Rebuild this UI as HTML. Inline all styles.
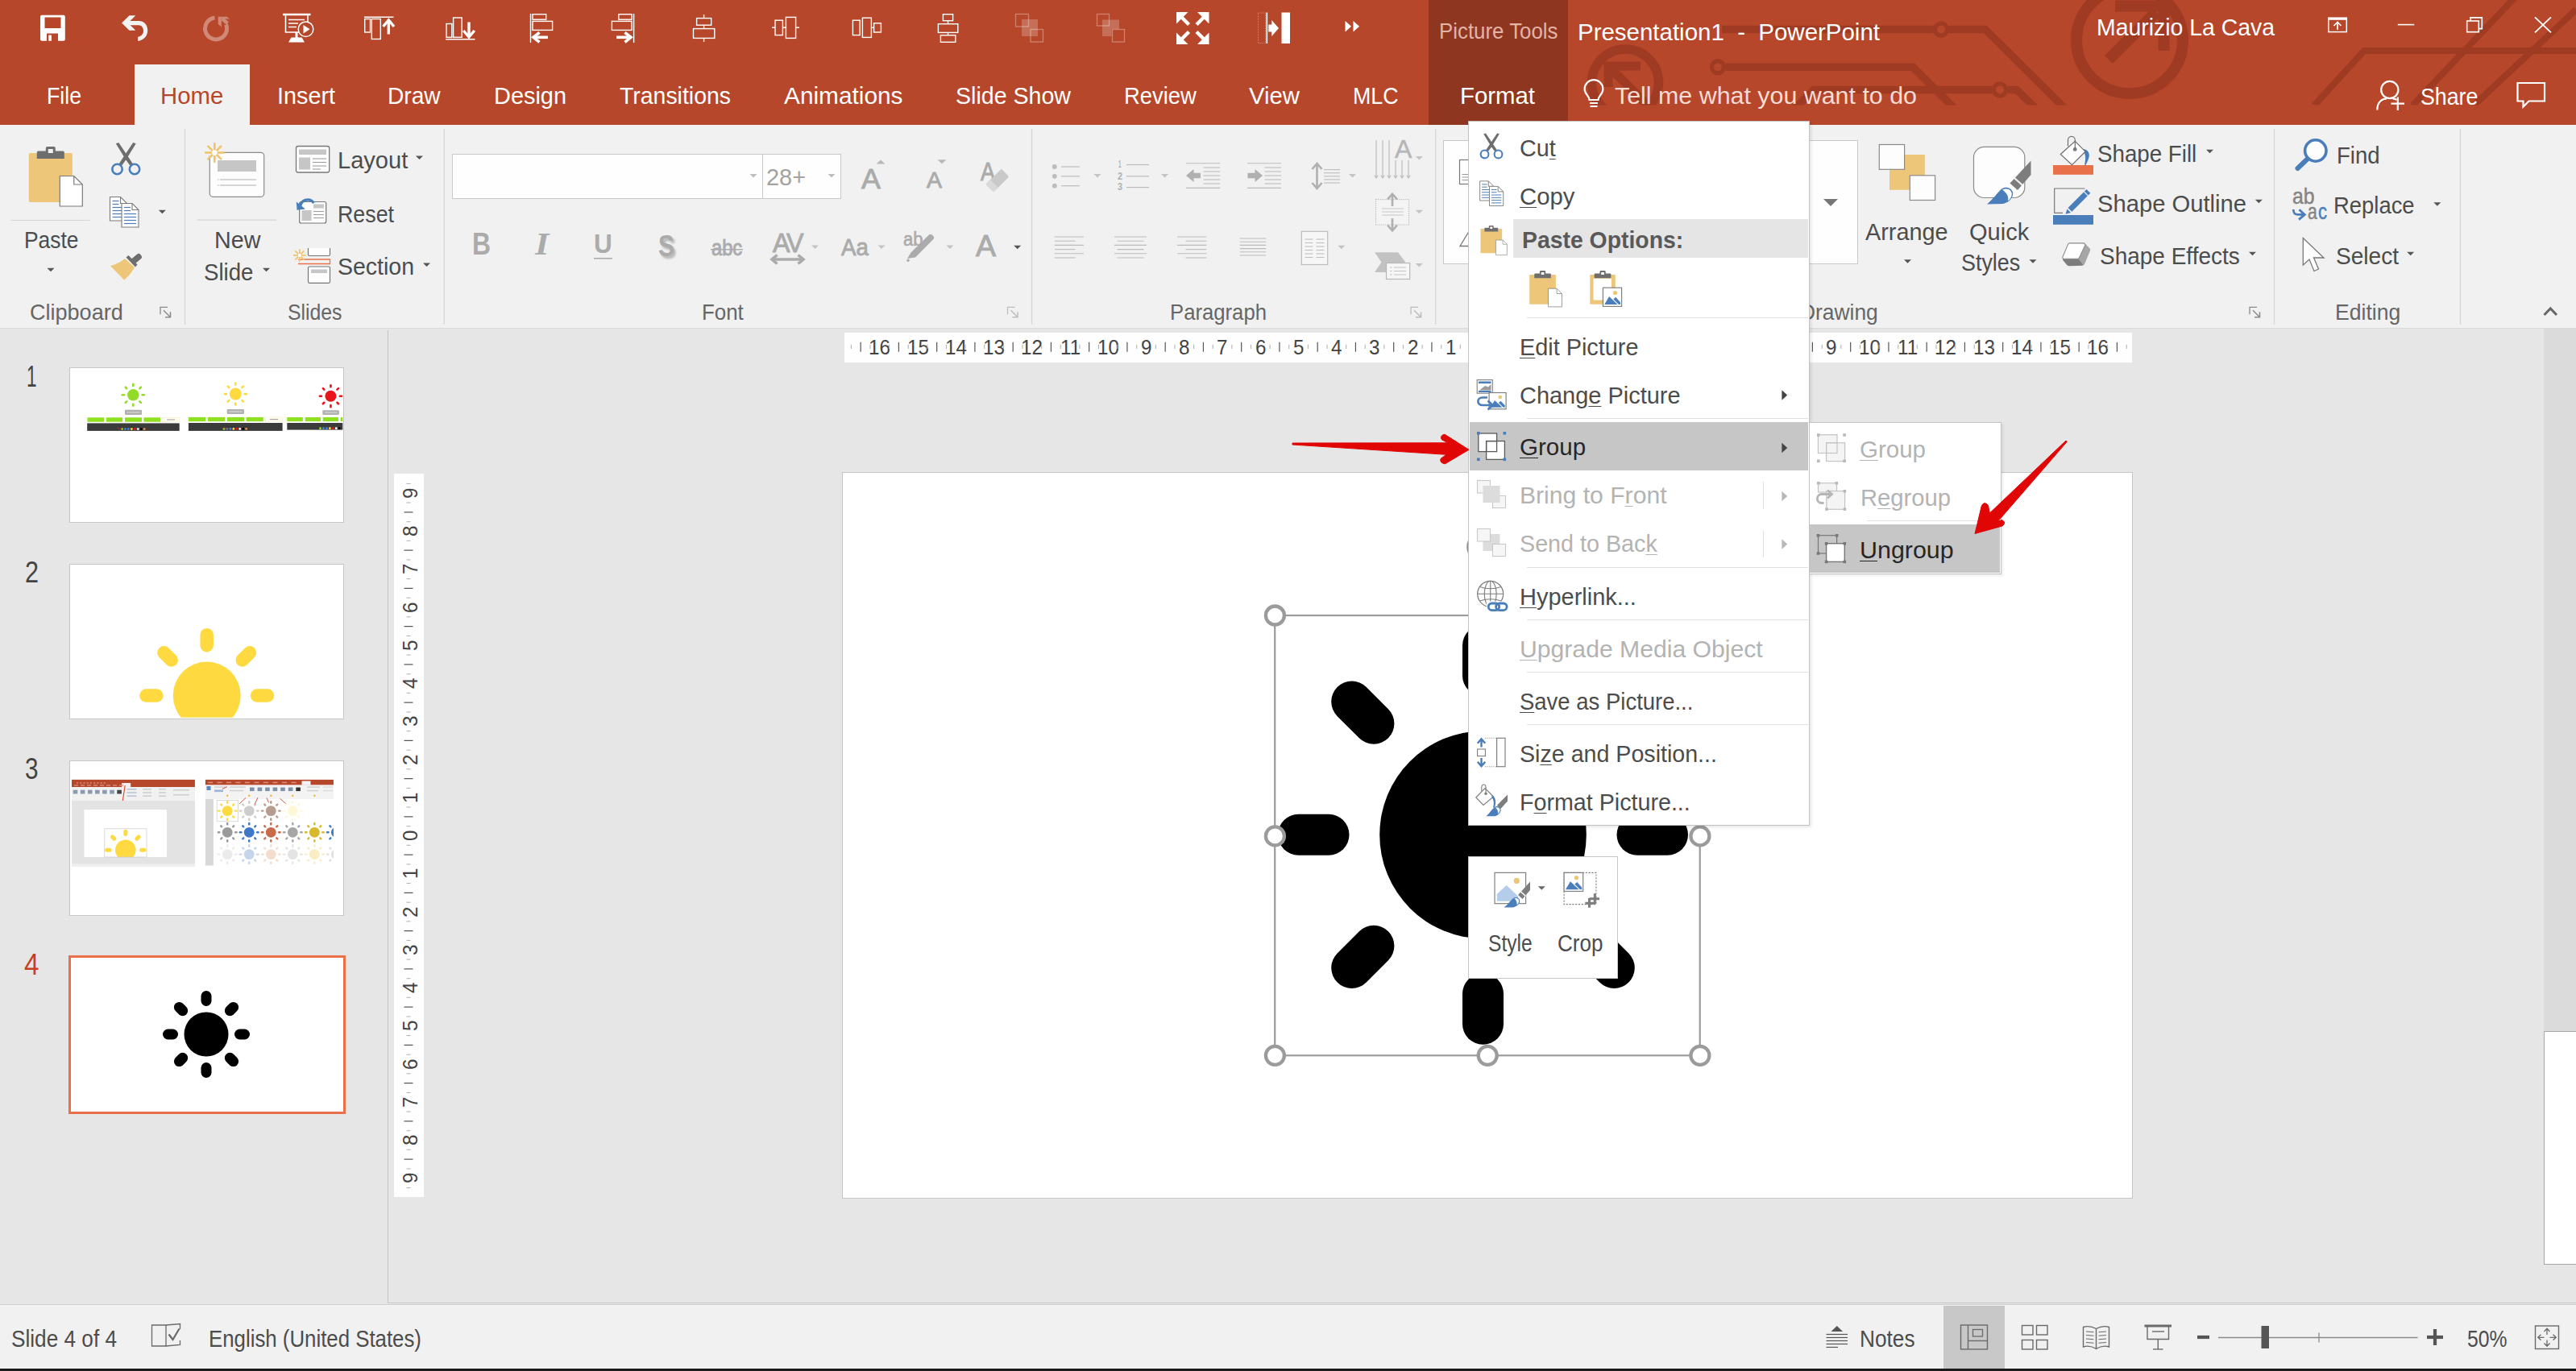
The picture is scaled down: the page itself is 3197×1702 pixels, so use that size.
<!DOCTYPE html><html><head><meta charset="utf-8"><title>PowerPoint</title><style>html,body{margin:0;padding:0;}body{width:3197px;height:1702px;position:relative;overflow:hidden;background:#e6e6e6;font-family:"Liberation Sans",sans-serif;}.t{position:absolute;white-space:pre;line-height:1;transform-origin:0 0;}.t u{text-decoration:underline;text-decoration-thickness:1.4px;text-underline-offset:2.6px;text-decoration-skip-ink:none;}.r{position:absolute;}.s{position:absolute;left:0;top:0;pointer-events:none;}</style></head><body><div class="r" style="left:0px;top:408px;width:3197px;height:1212px;background:#e6e6e6;"></div><div class="r" style="left:480.6px;top:410px;width:1.2px;height:1207px;background:#c2c2c2;"></div><div class="r" style="left:3157px;top:408px;width:40px;height:872.5px;background:#dbdbdb;"></div><div class="r" style="left:3157px;top:1280px;width:40px;height:290.3px;background:#fff;border-left:1.2px solid #a8a8a8;border-top:1.2px solid #a8a8a8;border-bottom:1.2px solid #a8a8a8;box-sizing:border-box;"></div><div class="r" style="left:481px;top:1616.5px;width:2716px;height:1.3px;background:#c6c6c6;"></div><div class="r" style="left:0px;top:1619.5px;width:3197px;height:80px;background:#f1f1f1;"></div><div class="r" style="left:0px;top:1619px;width:3197px;height:1.2px;background:#cfcfcf;"></div><div class="r" style="left:0px;top:1698.6px;width:3197px;height:3.4px;background:#1a1a1a;"></div><div class="t" style="left:32.50px;top:450.03px;font-size:36px;color:#444;transform:scaleX(0.6245);">1</div><div class="r" style="left:0px;top:0px;width:3197px;height:155px;background:#b7472a;"></div><svg class="s" width="3197" height="1702" viewBox="0 0 3197 1702" style=""><defs><clipPath id="cpat"><rect x="1945.5" y="0" width="1252" height="130.5"/></clipPath><clipPath id="ct1"><rect x="88" y="457" width="337.5" height="191"/></clipPath><clipPath id="ct2"><rect x="88" y="701" width="338" height="189.8"/></clipPath><clipPath id="ct3"><rect x="104.5" y="1005.1" width="102.5" height="58.8"/></clipPath><clipPath id="ct3b"><rect x="265" y="985" width="148.9" height="89.5"/></clipPath></defs><g clip-path="url(#cpat)"><g fill="none" stroke="#9f3b23" stroke-linecap="butt" stroke-linejoin="miter"><circle cx="2017" cy="102.5" r="41.5" stroke-width="11.5"/><path d="M2042,128 L2000,86 M1996,108 V82 H2036" stroke-width="11"/><circle cx="2132" cy="83.3" r="7.6" stroke-width="5.4"/><path d="M2142,83.3 H2374 L2428,137" stroke-width="9.5"/><circle cx="2409" cy="36.6" r="7.6" stroke-width="5.4"/><path d="M2137,36.6 H2399 M2419,36.6 H2464 L2566,138" stroke-width="9.5"/><circle cx="2482" cy="111.5" r="7.6" stroke-width="5.4"/><path d="M2224,138 L2251,111.5 H2472 M2492,111.5 H2503 L2530,138" stroke-width="9.5"/><circle cx="2643" cy="50" r="66" stroke-width="14"/><path d="M2617,74 L2676,15 M2625,7.5 H2685.5 V63" stroke-width="14"/><path d="M2872,131 L2934,63 H3197" stroke-width="8"/><path d="M2994,131 L3122,-4" stroke-width="8"/><path d="M3070,131 L3197,12" stroke-width="8"/></g></g></svg><div class="r" style="left:1773px;top:0px;width:172.5px;height:155px;background:#8f3621;"></div><div class="r" style="left:167px;top:80px;width:143px;height:76px;background:#f1f1f1;"></div><div class="t" style="left:58.25px;top:103.83px;font-size:29.5px;color:#fff;transform:scaleX(0.9048);">File</div><div class="t" style="left:198.75px;top:103.83px;font-size:29.5px;color:#b7472a;transform:scaleX(0.9942);">Home</div><div class="t" style="left:343.75px;top:103.83px;font-size:29.5px;color:#fff;transform:scaleX(0.9759);">Insert</div><div class="t" style="left:481.25px;top:103.83px;font-size:29.5px;color:#fff;transform:scaleX(0.9541);">Draw</div><div class="t" style="left:613.00px;top:103.83px;font-size:29.5px;color:#fff;transform:scaleX(0.9800);">Design</div><div class="t" style="left:769.00px;top:103.83px;font-size:29.5px;color:#fff;transform:scaleX(0.9637);">Transitions</div><div class="t" style="left:972.75px;top:103.83px;font-size:29.5px;color:#fff;transform:scaleX(1.0107);">Animations</div><div class="t" style="left:1186.00px;top:103.83px;font-size:29.5px;color:#fff;transform:scaleX(0.9683);">Slide Show</div><div class="t" style="left:1395.00px;top:103.83px;font-size:29.5px;color:#fff;transform:scaleX(0.9296);">Review</div><div class="t" style="left:1550.00px;top:103.83px;font-size:29.5px;color:#fff;transform:scaleX(0.9924);">View</div><div class="t" style="left:1679.00px;top:103.83px;font-size:29.5px;color:#fff;transform:scaleX(0.9073);">MLC</div><div class="t" style="left:1812.00px;top:103.83px;font-size:29.5px;color:#fff;transform:scaleX(0.9954);">Format</div><div class="t" style="left:2004.00px;top:103.83px;font-size:29.5px;color:#f6dcd5;transform:scaleX(1.0301);">Tell me what you want to do</div><div class="t" style="left:1786.00px;top:25.30px;font-size:28px;color:#e3b3a5;transform:scaleX(0.9231);">Picture Tools</div><div class="t" style="left:1958.00px;top:25.20px;font-size:29.3px;color:#fff;transform:scaleX(1.0055);">Presentation1  -  PowerPoint</div><div class="t" style="left:2601.50px;top:18.70px;font-size:29.3px;color:#fff;transform:scaleX(0.9692);">Maurizio La Cava</div><div class="t" style="left:3004.00px;top:105.40px;font-size:29.3px;color:#fff;transform:scaleX(0.9134);">Share</div><svg class="s" width="3197" height="1702" viewBox="0 0 3197 1702" style=""><path d="M52,18.8 H78.8 a2,2 0 0 1 2,2 V48.8 a2,2 0 0 1 -2,2 H52 a2,2 0 0 1 -2,-2 V20.8 a2,2 0 0 1 2,-2 z M55.5,21.5 V35 H75.5 V21.5 z M58,41.5 V50.8 H72 V41.5 z M60.3,43.5 h3.6 v7.3 h-3.6z" fill="#fff" fill-rule="evenodd"/><path d="M160.5,19.2 H168.3 L159,28.5 L168.3,37.8 H160.5 L151.1,28.5 z" fill="#f2f2f2"/><path d="M158.3,26.1 H172 C180,26.1 183.2,32 183.2,38 C183.2,45 178,50.2 171.1,50.9 L171.1,45.8 C175,45.2 178,42.2 178,38.4 C178,34 175.5,31.2 172,31.2 H158.3 z" fill="#f2f2f2"/><path d="M266.5,22 A13.5,13.5 0 1 0 280.6,30.5" fill="none" stroke="#d18977" stroke-width="5"/><path d="M270.7,20.8 H281.6 L285,23.6 H274.8 V33.6 L270.7,29.8 z" fill="#d18977"/><path d="M276,23.6 L282.5,29" stroke="#d18977" stroke-width="4.5"/><path d="M351,18 H385.5" stroke="#fff" stroke-width="2.6"/><path d="M354.5,19 V40 H371 M382,19 V27" fill="none" stroke="#fff" stroke-width="1.6"/><path d="M358,24.5 H378 M358,29 H370 M358,33.5 H368" stroke="#fff" stroke-width="1.4"/><circle cx="379.5" cy="36.2" r="9.3" fill="#b7472a" stroke="#fff" stroke-width="1.5"/><path d="M376.5,31 L384.5,36.2 L376.5,41.4z" fill="#fff"/><path d="M368,40 V47" stroke="#fff" stroke-width="3"/><path d="M361.5,46.5 H374.5 L378,52.5 H358 z" fill="#fff"/><line x1="452" y1="21.3" x2="488.5" y2="21.3" stroke="#fff" stroke-width="1.5" /><rect x="452.7" y="23.5" width="6.800000000000011" height="16.5" fill="none" stroke="#fff" stroke-width="1.4" rx="0" /><rect x="461.3" y="23.5" width="11.0" height="25.0" fill="none" stroke="#fff" stroke-width="1.4" rx="0" /><path d="M482.3,42.5 V27" stroke="#fff" stroke-width="3.4"/><path d="M475.5,33 L482.3,25 L489,33" fill="none" stroke="#fff" stroke-width="3.4"/><line x1="553" y1="48.8" x2="589.5" y2="48.8" stroke="#fff" stroke-width="1.5" /><rect x="554" y="29.5" width="6.7999999999999545" height="16.799999999999997" fill="none" stroke="#fff" stroke-width="1.4" rx="0" /><rect x="562.6" y="22" width="10.600000000000023" height="24.299999999999997" fill="none" stroke="#fff" stroke-width="1.4" rx="0" /><path d="M582,27.5 V44" stroke="#fff" stroke-width="3.4"/><path d="M575.2,38 L582,46 L588.8,38" fill="none" stroke="#fff" stroke-width="3.4"/><line x1="658.5" y1="17" x2="658.5" y2="53" stroke="#fff" stroke-width="1.4" /><rect x="661" y="17.7" width="16.700000000000045" height="6.5" fill="none" stroke="#fff" stroke-width="1.4" rx="0" /><rect x="661" y="26.4" width="24.600000000000023" height="11.0" fill="none" stroke="#fff" stroke-width="1.4" rx="0" /><path d="M680,46.3 H664" stroke="#fff" stroke-width="3.6"/><path d="M669.5,40.3 L662,46.3 L669.5,52.3" fill="none" stroke="#fff" stroke-width="3.6"/><line x1="786.6" y1="17" x2="786.6" y2="53" stroke="#fff" stroke-width="1.4" /><rect x="767.8" y="17.7" width="16.200000000000045" height="6.5" fill="none" stroke="#fff" stroke-width="1.4" rx="0" /><rect x="759.4" y="26.4" width="24.600000000000023" height="11.0" fill="none" stroke="#fff" stroke-width="1.4" rx="0" /><path d="M765,46.3 H781" stroke="#fff" stroke-width="3.6"/><path d="M775.5,40.3 L783,46.3 L775.5,52.3" fill="none" stroke="#fff" stroke-width="3.6"/><line x1="873.6" y1="18" x2="873.6" y2="52" stroke="#fff" stroke-width="1.4" /><rect x="864.6" y="22.6" width="18.100000000000023" height="8.599999999999998" fill="#b7472a" stroke="#fff" stroke-width="1.4" rx="0" /><rect x="860.5" y="35.6" width="26.299999999999955" height="11.799999999999997" fill="#b7472a" stroke="#fff" stroke-width="1.4" rx="0" /><line x1="958" y1="34.3" x2="992" y2="34.3" stroke="#fff" stroke-width="1.4" /><rect x="962" y="25.2" width="9.399999999999977" height="18.400000000000002" fill="#b7472a" stroke="#fff" stroke-width="1.4" rx="0" /><rect x="975.4" y="21.4" width="12.200000000000045" height="26.0" fill="#b7472a" stroke="#fff" stroke-width="1.4" rx="0" /><rect x="1058.4" y="25.2" width="8.799999999999955" height="18.400000000000002" fill="none" stroke="#fff" stroke-width="1.4" rx="0" /><rect x="1070.4" y="22.2" width="11.0" height="24.2" fill="none" stroke="#fff" stroke-width="1.4" rx="0" /><rect x="1084.6" y="28.8" width="8.800000000000182" height="11.2" fill="none" stroke="#fff" stroke-width="1.4" rx="0" /><line x1="1081.4" y1="34.3" x2="1084.6" y2="34.3" stroke="#fff" stroke-width="1.4" /><line x1="1176.5" y1="25.7" x2="1176.5" y2="43.8" stroke="#fff" stroke-width="1.4" /><rect x="1170.4" y="17.7" width="12.199999999999818" height="8.0" fill="none" stroke="#fff" stroke-width="1.4" rx="0" /><rect x="1164.4" y="29.7" width="24.399999999999864" height="10.7" fill="#b7472a" stroke="#fff" stroke-width="1.4" rx="0" /><rect x="1167.4" y="43.8" width="18.399999999999864" height="8.5" fill="none" stroke="#fff" stroke-width="1.4" rx="0" /><rect x="1260.5" y="17.5" width="16.0" height="15.5" fill="none" stroke="rgba(255,255,255,0.32)" stroke-width="1.3" rx="0" /><rect x="1268" y="24" width="20" height="21" fill="rgba(255,255,255,0.22)"/><rect x="1279" y="36.5" width="15.5" height="15.5" fill="none" stroke="rgba(255,255,255,0.32)" stroke-width="1.3" rx="0" /><rect x="1361.5" y="17.5" width="15.0" height="14.5" fill="none" stroke="rgba(255,255,255,0.32)" stroke-width="1.3" rx="0" /><rect x="1368" y="24.5" width="11.5" height="20.5" fill="rgba(255,255,255,0.22)"/><rect x="1379.5" y="24.5" width="9.5" height="11.5" fill="rgba(255,255,255,0.22)"/><rect x="1380.5" y="36.5" width="15.0" height="15.5" fill="none" stroke="rgba(255,255,255,0.32)" stroke-width="1.3" rx="0" /><path d="M1460,15 h14.5 l-14.5,14.5 z" fill="#fff"/><path d="M1465,20 L1475.5,30.5" stroke="#fff" stroke-width="4.4"/><path d="M1500.5,15 h-14.5 l14.5,14.5 z" fill="#fff"/><path d="M1495.5,20 L1485.0,30.5" stroke="#fff" stroke-width="4.4"/><path d="M1460,55 h14.5 l-14.5,-14.5 z" fill="#fff"/><path d="M1465,50 L1475.5,39.5" stroke="#fff" stroke-width="4.4"/><path d="M1500.5,55 h-14.5 l14.5,-14.5 z" fill="#fff"/><path d="M1495.5,50 L1485.0,39.5" stroke="#fff" stroke-width="4.4"/><rect x="1561.5" y="16" width="9.0" height="37.5" fill="none" stroke="rgba(255,255,255,0.35)" stroke-width="1" rx="0" stroke-dasharray="1 1"/><line x1="1572.3" y1="15.5" x2="1572.3" y2="54" stroke="#fff" stroke-width="1.6" /><path d="M1574.3,30.5 h4 v-5.5 l8.7,10 l-8.7,10 v-5.5 h-4z" fill="#fff"/><rect x="1590.5" y="15.5" width="10.5" height="38.5" fill="#fff"/><path d="M1669.5,26 l7.5,6.7 l-7.5,6.7z M1679.5,26 l7.5,6.7 l-7.5,6.7z" fill="#fff"/><path d="M1972.5,124 C1972.5,119 1966.6,117 1966.6,110.5 A11.4,11.4 0 0 1 1989.4,110.5 C1989.4,117 1983.5,119 1983.5,124 z" fill="none" stroke="#fff" stroke-width="2.2"/><path d="M1973,128 H1983 M1973.5,132 H1982.5" stroke="#fff" stroke-width="2.2"/><rect x="2889.8" y="22.3" width="22.5" height="17.3" fill="none" stroke="#fff" stroke-width="1.5" rx="0" /><line x1="2889" y1="23.3" x2="2913" y2="23.3" stroke="#fff" stroke-width="3" /><path d="M2901,37 V28 M2896.5,32 L2901,27.5 L2905.5,32" fill="none" stroke="#fff" stroke-width="1.6"/><line x1="2975.8" y1="30.6" x2="2996.3" y2="30.6" stroke="#fff" stroke-width="1.6" /><rect x="3061.7" y="26" width="14.600000000000364" height="13.700000000000003" fill="none" stroke="#fff" stroke-width="1.6" rx="0" /><path d="M3066,26 V21.9 H3080.3 V35.6 H3076.3" fill="none" stroke="#fff" stroke-width="1.6"/><path d="M3146,21.4 L3166,40.4 M3166,21.4 L3146,40.4" stroke="#fff" stroke-width="1.8"/><circle cx="2965.8" cy="111.5" r="10.6" fill="none" stroke="#fff" stroke-width="2.2"/><path d="M2950.3,136.5 C2950.3,126 2957,122.5 2962,122.3 M2969.5,122.3 C2971.5,122.5 2973,123 2974.5,123.8" fill="none" stroke="#fff" stroke-width="2.2"/><path d="M2975.8,120.5 V137 M2967.5,128.7 H2984" stroke="#fff" stroke-width="2.2"/><path d="M3124.5,103 H3158 V125.5 H3138.5 L3131.5,132.5 V125.5 H3124.5 z" fill="none" stroke="#fff" stroke-width="2.2"/></svg><div class="r" style="left:0px;top:155px;width:3197px;height:252px;background:#f1f1f1;"></div><div class="r" style="left:0px;top:406.5px;width:3197px;height:1.5px;background:#dadada;"></div><div class="t" style="left:36.75px;top:374.37px;font-size:27.8px;color:#666;transform:scaleX(0.9728);">Clipboard</div><div class="t" style="left:357.00px;top:374.37px;font-size:27.8px;color:#666;transform:scaleX(0.8914);">Slides</div><div class="t" style="left:871.00px;top:374.37px;font-size:27.8px;color:#666;transform:scaleX(0.9303);">Font</div><div class="t" style="left:1451.75px;top:374.37px;font-size:27.8px;color:#666;transform:scaleX(0.9243);">Paragraph</div><div class="t" style="left:2897.60px;top:374.37px;font-size:27.8px;color:#666;transform:scaleX(0.9552);">Editing</div><div class="t" style="left:2234.45px;top:374.37px;font-size:27.8px;color:#666;transform:scaleX(0.9493);">Drawing</div><div class="t" style="left:29.50px;top:282.70px;font-size:29.3px;color:#4c4c4c;transform:scaleX(0.9010);">Paste</div><div class="t" style="left:265.50px;top:282.70px;font-size:29.3px;color:#4c4c4c;transform:scaleX(0.9798);">New</div><div class="t" style="left:253.00px;top:322.70px;font-size:29.3px;color:#4c4c4c;transform:scaleX(0.9438);">Slide</div><div class="t" style="left:418.75px;top:183.95px;font-size:29.3px;color:#4c4c4c;transform:scaleX(0.9919);">Layout</div><div class="t" style="left:418.75px;top:250.70px;font-size:29.3px;color:#4c4c4c;transform:scaleX(0.9147);">Reset</div><div class="t" style="left:418.75px;top:316.45px;font-size:29.3px;color:#4c4c4c;transform:scaleX(0.9722);">Section</div><div class="r" style="left:560.5px;top:190.7px;width:483px;height:56.8px;background:#fefefe;border:1.3px solid #c8c8c8;box-sizing:border-box;"></div><div class="r" style="left:946px;top:190.7px;width:1.3px;height:56.8px;background:#c8c8c8;"></div><div class="t" style="left:951.00px;top:205.20px;font-size:29.3px;color:#a3a3a3;transform:scaleX(0.9861);">28+</div><div class="t" style="left:1069.00px;top:204.17px;font-size:35px;color:#ababab;transform:scaleX(1.0195);-webkit-text-stroke:0.9px #ababab;">A</div><div class="t" style="left:1149.50px;top:210.10px;font-size:28px;color:#ababab;transform:scaleX(1.0173);-webkit-text-stroke:0.9px #ababab;">A</div><div class="t" style="left:1217.00px;top:197.56px;font-size:31px;color:#ababab;transform:scaleX(0.8705);-webkit-text-stroke:0.9px #ababab;">A</div><div class="t" style="left:586.00px;top:283.71px;font-size:38.5px;color:#ababab;transform:scaleX(0.8274);font-weight:bold;">B</div><div class="t" style="left:664.44px;top:283.25px;font-size:39px;color:#ababab;transform:scaleX(1.1383);font-weight:bold;font-style:italic;font-family:'Liberation Serif',serif;">I</div><div class="t" style="left:737.00px;top:287.49px;font-size:32.5px;color:#ababab;transform:scaleX(0.9717);font-weight:bold;">U</div><div class="t" style="left:816.50px;top:287.53px;font-size:36px;color:#ababab;transform:scaleX(0.8329);font-weight:bold;text-shadow:3px 3px 3px rgba(0,0,0,0.25);">S</div><div class="t" style="left:882.80px;top:294.64px;font-size:27px;color:#ababab;transform:scaleX(0.8777);-webkit-text-stroke:0.9px #ababab;">abc</div><div class="t" style="left:958.50px;top:284.57px;font-size:33px;color:#ababab;transform:scaleX(0.9740);letter-spacing:-2px;-webkit-text-stroke:0.9px #ababab;">AV</div><div class="t" style="left:1044.00px;top:293.45px;font-size:29px;color:#ababab;transform:scaleX(0.9522);-webkit-text-stroke:0.9px #ababab;">Aa</div><div class="t" style="left:1120.80px;top:286.13px;font-size:23px;color:#ababab;transform:scaleX(0.9579);-webkit-text-stroke:0.6px #ababab;">ab</div><div class="t" style="left:1211.00px;top:287.53px;font-size:36px;color:#ababab;transform:scaleX(1.0411);-webkit-text-stroke:0.9px #ababab;">A</div><div class="t" style="left:1387.50px;top:198.22px;font-size:12.5px;color:#b0b0b0;transform:scaleX(0.5036);font-weight:bold;">1</div><div class="t" style="left:1386.50px;top:212.52px;font-size:12.5px;color:#b0b0b0;transform:scaleX(0.8633);font-weight:bold;">2</div><div class="t" style="left:1386.50px;top:226.32px;font-size:12.5px;color:#b0b0b0;transform:scaleX(0.8633);font-weight:bold;">3</div><div class="t" style="left:1730.50px;top:170.48px;font-size:30.5px;color:#b6b6b6;transform:scaleX(1.0470);-webkit-text-stroke:0.5px #b6b6b6;">A</div><div class="r" style="left:1791px;top:174.3px;width:515.3px;height:154px;background:#fefefe;border:1.3px solid #c8c8c8;box-sizing:border-box;"></div><div class="t" style="left:1815.50px;top:200.15px;font-size:14px;color:#4a7ebb;transform:scaleX(0.9638);">A</div><div class="t" style="left:2315.00px;top:272.70px;font-size:29.3px;color:#4c4c4c;transform:scaleX(0.9832);">Arrange</div><div class="t" style="left:2443.75px;top:272.70px;font-size:29.3px;color:#4c4c4c;transform:scaleX(0.9907);">Quick</div><div class="t" style="left:2434.25px;top:311.45px;font-size:29.3px;color:#4c4c4c;transform:scaleX(0.9181);">Styles</div><div class="t" style="left:2603.00px;top:175.95px;font-size:29.3px;color:#4c4c4c;transform:scaleX(0.9459);">Shape Fill</div><div class="t" style="left:2603.00px;top:237.70px;font-size:29.3px;color:#4c4c4c;transform:scaleX(0.9962);">Shape Outline</div><div class="t" style="left:2606.25px;top:302.70px;font-size:29.3px;color:#4c4c4c;transform:scaleX(0.9552);">Shape Effects</div><div class="t" style="left:2899.80px;top:178.00px;font-size:29.3px;color:#4c4c4c;transform:scaleX(0.9405);">Find</div><div class="t" style="left:2844.80px;top:230.20px;font-size:28px;color:#858585;transform:scaleX(0.8864);-webkit-text-stroke:0.5px #858585;">ab</div><div class="t" style="left:2864.10px;top:249.00px;font-size:28px;color:#858585;transform:scaleX(0.7566);-webkit-text-stroke:0.5px #858585;">a</div><div class="t" style="left:2877.20px;top:249.00px;font-size:28px;color:#4a7ebb;transform:scaleX(0.7857);-webkit-text-stroke:0.5px #4a7ebb;">c</div><div class="t" style="left:2896.00px;top:240.20px;font-size:29.3px;color:#4c4c4c;transform:scaleX(0.9358);">Replace</div><div class="t" style="left:2899.20px;top:303.10px;font-size:29.3px;color:#4c4c4c;transform:scaleX(0.9592);">Select</div><svg class="s" width="3197" height="1702" viewBox="0 0 3197 1702" style=""><line x1="229.5" y1="160" x2="229.5" y2="402.5" stroke="#d4d4d4" stroke-width="1.2" /><line x1="551.3" y1="160" x2="551.3" y2="402.5" stroke="#d4d4d4" stroke-width="1.2" /><line x1="1280.5" y1="160" x2="1280.5" y2="402.5" stroke="#d4d4d4" stroke-width="1.2" /><line x1="1781.7" y1="160" x2="1781.7" y2="402.5" stroke="#d4d4d4" stroke-width="1.2" /><line x1="2822.5" y1="160" x2="2822.5" y2="402.5" stroke="#d4d4d4" stroke-width="1.2" /><line x1="3053.4" y1="160" x2="3053.4" y2="402.5" stroke="#d4d4d4" stroke-width="1.2" /><path d="M199,390.3 V381.3 H208" fill="none" stroke="#8a8a8a" stroke-width="1.3"/><path d="M203,385.3 L211,393.3 M211.5,387.3 V393.8 H205" fill="none" stroke="#8a8a8a" stroke-width="1.5"/><path d="M1250.5,390.3 V381.3 H1259.5" fill="none" stroke="#bdbdbd" stroke-width="1.3"/><path d="M1254.5,385.3 L1262.5,393.3 M1263.0,387.3 V393.8 H1256.5" fill="none" stroke="#bdbdbd" stroke-width="1.5"/><path d="M1751,390.3 V381.3 H1760" fill="none" stroke="#bdbdbd" stroke-width="1.3"/><path d="M1755,385.3 L1763,393.3 M1763.5,387.3 V393.8 H1757" fill="none" stroke="#bdbdbd" stroke-width="1.5"/><path d="M2792,390.3 V381.3 H2801" fill="none" stroke="#8a8a8a" stroke-width="1.3"/><path d="M2796,385.3 L2804,393.3 M2804.5,387.3 V393.8 H2798" fill="none" stroke="#8a8a8a" stroke-width="1.5"/><path d="M3157.5,391 L3165.3,383 L3173,391" fill="none" stroke="#666" stroke-width="3" /><g transform="translate(35.8,182) scale(1.0)"><rect x="0" y="8" width="54" height="61" rx="2" fill="#edc67a"/><path d="M10,15 V7 a1.5,1.5 0 0 1 1.5,-1.5 H21 V2 a2,2 0 0 1 2,-2 h8 a2,2 0 0 1 2,2 V5.5 H42.5 a1.5,1.5 0 0 1 1.5,1.5 V15 z M24,3 v5 h6 v-5z" fill="#6e6e6e" fill-rule="evenodd"/><path d="M38.5,36.5 H56 L66.5,47 V74 H38.5z" fill="#fff" stroke="#7a7a7a" stroke-width="1.2"/><path d="M56,36.5 V47 H66.5" fill="none" stroke="#7a7a7a" stroke-width="1.2"/></g><line x1="14" y1="273.5" x2="111.5" y2="273.5" stroke="#d4d4d4" stroke-width="1.2" /><path d="M58.5,332.75 h9 l-4.5,4.5 z" fill="#555"/><g transform="translate(137.5,177) scale(1.0)"><path d="M6.3,1.2 L9.8,0 L27.5,26.5 L24.2,29 L18.75,21.5 z" fill="#6e6e6e"/><path d="M31.2,1.2 L27.7,0 L10,26.5 L13.3,29 L18.75,21.5 z" fill="#6e6e6e"/><circle cx="8" cy="33" r="6.2" fill="none" stroke="#4a7ebb" stroke-width="2.6"/><circle cx="29.5" cy="33" r="6.2" fill="none" stroke="#4a7ebb" stroke-width="2.6"/></g><g transform="translate(136,244) scale(1.0)"><path d="M0.5,0.5 h13 l8,8 v21.5 h-21z" fill="#fff" stroke="#7a7a7a" stroke-width="1.1"/><path d="M13.5,0.5 v8 h8" fill="none" stroke="#7a7a7a" stroke-width="1.1"/><path d="M3.5,5.5 h8" stroke="#4a7ebb" stroke-width="1.2"/><path d="M3.5,9.5 h8" stroke="#4a7ebb" stroke-width="1.2"/><path d="M3.5,13.5 h15" stroke="#4a7ebb" stroke-width="1.2"/><path d="M3.5,17.5 h15" stroke="#4a7ebb" stroke-width="1.2"/><path d="M3.5,21.5 h15" stroke="#4a7ebb" stroke-width="1.2"/><path d="M3.5,25.5 h15" stroke="#4a7ebb" stroke-width="1.2"/><path d="M15,8.5 h13 l8,8 v21.5 h-21z" fill="#fff" stroke="#7a7a7a" stroke-width="1.1"/><path d="M28,8.5 v8 h8" fill="none" stroke="#7a7a7a" stroke-width="1.1"/><path d="M18,13.5 h8" stroke="#4a7ebb" stroke-width="1.2"/><path d="M18,17.5 h8" stroke="#4a7ebb" stroke-width="1.2"/><path d="M18,21.5 h15" stroke="#4a7ebb" stroke-width="1.2"/><path d="M18,25.5 h15" stroke="#4a7ebb" stroke-width="1.2"/><path d="M18,29.5 h15" stroke="#4a7ebb" stroke-width="1.2"/><path d="M18,33.5 h15" stroke="#4a7ebb" stroke-width="1.2"/></g><path d="M196.8,260.75 h9 l-4.5,4.5 z" fill="#555"/><g transform="translate(137,315)"><path d="M0,15 C8,13 14,9 18,6 L30,17 C27,22 22,29 17,32.5 z" fill="#edc67a"/><path d="M19.5,4.5 L22.5,2 L33.5,13.5 L31,16.5 z" fill="#6e6e6e"/><path d="M26,6.5 L33,0.8 a3.2,3.2 0 0 1 4.5,0.4 l0.6,0.8 a3.2,3.2 0 0 1 -0.4,4.5 L30.5,12.5z" fill="#6e6e6e"/></g><rect x="260.3" y="189.3" width="67.39999999999998" height="55.0" fill="#fdfdfd" stroke="#8c8c8c" stroke-width="1.2" rx="4" /><rect x="270" y="199" width="48" height="14" fill="#c6c6c6"/><line x1="273" y1="223" x2="318" y2="223" stroke="#b0b0b0" stroke-width="1.1" /><line x1="273" y1="230" x2="318" y2="230" stroke="#b0b0b0" stroke-width="1.1" /><line x1="270" y1="223" x2="271.5" y2="223" stroke="#b0b0b0" stroke-width="1.1" /><line x1="270" y1="230" x2="271.5" y2="230" stroke="#b0b0b0" stroke-width="1.1" /><circle cx="266.3" cy="189.5" r="7.626" fill="#f1f1f1"/><line x1="269.375" y1="189.5" x2="278.6" y2="189.5" stroke="#f0c46c" stroke-width="2.6" /><line x1="268.4743533521486" y1="191.67435335214864" x2="274.9974134085945" y2="198.19741340859454" stroke="#f0c46c" stroke-width="2.6" /><line x1="266.3" y1="192.575" x2="266.3" y2="201.8" stroke="#f0c46c" stroke-width="2.6" /><line x1="264.1256466478514" y1="191.67435335214864" x2="257.6025865914055" y2="198.19741340859454" stroke="#f0c46c" stroke-width="2.6" /><line x1="263.225" y1="189.5" x2="254.0" y2="189.5" stroke="#f0c46c" stroke-width="2.6" /><line x1="264.1256466478514" y1="187.32564664785136" x2="257.6025865914055" y2="180.80258659140546" stroke="#f0c46c" stroke-width="2.6" /><line x1="266.3" y1="186.425" x2="266.3" y2="177.2" stroke="#f0c46c" stroke-width="2.6" /><line x1="268.4743533521486" y1="187.32564664785136" x2="274.9974134085945" y2="180.80258659140546" stroke="#f0c46c" stroke-width="2.6" /><circle cx="266.3" cy="189.5" r="3.1980000000000004" fill="#fff"/><line x1="245" y1="273.2" x2="343" y2="273.2" stroke="#d4d4d4" stroke-width="1.2" /><path d="M326.0,332.75 h9 l-4.5,4.5 z" fill="#555"/><rect x="367.5" y="181.5" width="41.19999999999999" height="32.5" fill="#fdfdfd" stroke="#777" stroke-width="1.3" rx="2.5" /><rect x="371" y="185.5" width="34" height="6.5" fill="#c6c6c6"/><rect x="371" y="195.5" width="14" height="15" fill="#c6c6c6"/><line x1="388" y1="197" x2="405" y2="197" stroke="#a0a0a0" stroke-width="1.1" /><line x1="388" y1="201.5" x2="405" y2="201.5" stroke="#a0a0a0" stroke-width="1.1" /><line x1="388" y1="206" x2="405" y2="206" stroke="#a0a0a0" stroke-width="1.1" /><line x1="388" y1="210" x2="398" y2="210" stroke="#a0a0a0" stroke-width="1.1" /><path d="M516.0,193.55 h9 l-4.5,4.5 z" fill="#555"/><rect x="371.7" y="250.5" width="33.0" height="26.5" fill="#fdfdfd" stroke="#777" stroke-width="1.2" rx="2" /><rect x="389" y="253.5" width="13" height="5" fill="#c6c6c6"/><rect x="374.5" y="261" width="12" height="13" fill="#c6c6c6"/><line x1="389" y1="262.5" x2="402" y2="262.5" stroke="#a0a0a0" stroke-width="1.1" /><line x1="389" y1="266.5" x2="402" y2="266.5" stroke="#a0a0a0" stroke-width="1.1" /><line x1="389" y1="270.5" x2="402" y2="270.5" stroke="#a0a0a0" stroke-width="1.1" /><path d="M372.5,258 C372.5,248 384,244.5 389.5,252" fill="none" stroke="#4a7ebb" stroke-width="3.4"/><path d="M367.8,250.5 L379,259.5 L368.5,260.8 z" fill="#4a7ebb"/><path d="M382.5,308 V316 a1.5,1.5 0 0 0 1.5,1.5 H408 a1.5,1.5 0 0 0 1.5,-1.5 V308" fill="#fdfdfd" stroke="#777" stroke-width="1.2"/><path d="M370,322 H409.5 V327.5 H370" fill="none" stroke="#e9714a" stroke-width="1.3"/><rect x="382.5" y="331" width="27.0" height="20.30000000000001" fill="#fdfdfd" stroke="#777" stroke-width="1.2" rx="1.5" /><rect x="386" y="334.5" width="20" height="4.5" fill="#c6c6c6"/><circle cx="371.8" cy="317" r="4.836" fill="#f1f1f1"/><line x1="373.75" y1="317.0" x2="379.6" y2="317.0" stroke="#f0c46c" stroke-width="1.8" /><line x1="373.1788582233138" y1="318.3788582233138" x2="377.3154328932551" y2="322.5154328932551" stroke="#f0c46c" stroke-width="1.8" /><line x1="371.8" y1="318.95" x2="371.8" y2="324.8" stroke="#f0c46c" stroke-width="1.8" /><line x1="370.4211417766862" y1="318.3788582233138" x2="366.28456710674493" y2="322.5154328932551" stroke="#f0c46c" stroke-width="1.8" /><line x1="369.85" y1="317.0" x2="364.0" y2="317.0" stroke="#f0c46c" stroke-width="1.8" /><line x1="370.4211417766862" y1="315.6211417766862" x2="366.28456710674493" y2="311.4845671067449" stroke="#f0c46c" stroke-width="1.8" /><line x1="371.8" y1="315.05" x2="371.8" y2="309.2" stroke="#f0c46c" stroke-width="1.8" /><line x1="373.1788582233138" y1="315.6211417766862" x2="377.3154328932551" y2="311.4845671067449" stroke="#f0c46c" stroke-width="1.8" /><circle cx="371.8" cy="317" r="2.028" fill="#fff"/><path d="M525.0,326.55 h9 l-4.5,4.5 z" fill="#555"/><path d="M930.5,216.05 h9 l-4.5,4.5 z" fill="#bdbdbd"/><path d="M1027.5,216.05 h9 l-4.5,4.5 z" fill="#bdbdbd"/><path d="M1087.5,203.5 l5.5,-5 l5.5,5z" fill="#b8b8b8"/><path d="M1163.5,198.3 h11 l-5.5,5z" fill="#b8b8b8"/><path d="M1224.5,227.5 L1241.5,211 a2,2 0 0 1 2.8,0 L1251,218 a2,2 0 0 1 0,2.8 L1234.5,237 a2,2 0 0 1 -2.8,0 L1224.5,230 a2,2 0 0 1 0,-2.5z" fill="#c9c9c9"/><path d="M1224.5,227.5 l4.5,-4.4 l9.8,9.8 l-4.3,4.1 a2,2 0 0 1 -2.8,0 L1224.5,230z" fill="#d9d9d9"/><line x1="737" y1="320.8" x2="759.8" y2="320.8" stroke="#ababab" stroke-width="1.6" /><line x1="882" y1="309.8" x2="922" y2="309.8" stroke="#ababab" stroke-width="1.6" /><path d="M960,322 H995" stroke="#ababab" stroke-width="3.6"/><path d="M964.5,316.5 L958,322 L964.5,327.5 M990.5,316.5 L997,322 L990.5,327.5" fill="none" stroke="#ababab" stroke-width="3.6"/><path d="M1007.0,304.55 h9 l-4.5,4.5 z" fill="#c4c4c4"/><path d="M1089.5,304.55 h9 l-4.5,4.5 z" fill="#c4c4c4"/><path d="M1126,321 L1130.5,313.5 L1153,291.5 a2.6,2.6 0 0 1 3.6,0 l1.8,1.8 a2.6,2.6 0 0 1 0,3.6 L1136,319.5 z" fill="#ababab"/><circle cx="1127" cy="323.3" r="1.7" fill="#ababab"/><path d="M1174.5,304.55 h9 l-4.5,4.5 z" fill="#c4c4c4"/><path d="M1258.2,304.75 h9 l-4.5,4.5 z" fill="#555"/><circle cx="1308.8" cy="207" r="2.9" fill="#bcbcbc" stroke="none" stroke-width="1.5"/><line x1="1317" y1="207" x2="1339.8" y2="207" stroke="#bcbcbc" stroke-width="1.2" /><circle cx="1308.8" cy="218.8" r="2.9" fill="#bcbcbc" stroke="none" stroke-width="1.5"/><line x1="1317" y1="218.8" x2="1339.8" y2="218.8" stroke="#bcbcbc" stroke-width="1.2" /><circle cx="1308.8" cy="230.7" r="2.9" fill="#bcbcbc" stroke="none" stroke-width="1.5"/><line x1="1317" y1="230.7" x2="1339.8" y2="230.7" stroke="#bcbcbc" stroke-width="1.2" /><path d="M1357.5,216.05 h9 l-4.5,4.5 z" fill="#c4c4c4"/><line x1="1398" y1="204.5" x2="1426" y2="204.5" stroke="#bcbcbc" stroke-width="1.2" /><line x1="1398" y1="218.8" x2="1426" y2="218.8" stroke="#bcbcbc" stroke-width="1.2" /><line x1="1398" y1="232.6" x2="1426" y2="232.6" stroke="#bcbcbc" stroke-width="1.2" /><path d="M1441.0,216.05 h9 l-4.5,4.5 z" fill="#c4c4c4"/><line x1="1472" y1="202.8" x2="1514.2" y2="202.8" stroke="#bcbcbc" stroke-width="1.1" /><line x1="1472" y1="233.4" x2="1514.2" y2="233.4" stroke="#bcbcbc" stroke-width="1.1" /><line x1="1493.5" y1="208" x2="1514.2" y2="208" stroke="#bcbcbc" stroke-width="1.1" /><line x1="1493.5" y1="213" x2="1514.2" y2="213" stroke="#bcbcbc" stroke-width="1.1" /><line x1="1493.5" y1="218" x2="1514.2" y2="218" stroke="#bcbcbc" stroke-width="1.1" /><line x1="1493.5" y1="223" x2="1514.2" y2="223" stroke="#bcbcbc" stroke-width="1.1" /><line x1="1493.5" y1="228" x2="1514.2" y2="228" stroke="#bcbcbc" stroke-width="1.1" /><path d="M1472,218 l9.5,-8 v4.8 h8.5 v6.4 h-8.5 v4.8z" fill="#b0b0b0"/><line x1="1548" y1="202.8" x2="1590" y2="202.8" stroke="#bcbcbc" stroke-width="1.1" /><line x1="1548" y1="233.4" x2="1590" y2="233.4" stroke="#bcbcbc" stroke-width="1.1" /><line x1="1569.5" y1="208" x2="1590" y2="208" stroke="#bcbcbc" stroke-width="1.1" /><line x1="1569.5" y1="213" x2="1590" y2="213" stroke="#bcbcbc" stroke-width="1.1" /><line x1="1569.5" y1="218" x2="1590" y2="218" stroke="#bcbcbc" stroke-width="1.1" /><line x1="1569.5" y1="223" x2="1590" y2="223" stroke="#bcbcbc" stroke-width="1.1" /><line x1="1569.5" y1="228" x2="1590" y2="228" stroke="#bcbcbc" stroke-width="1.1" /><path d="M1567,218 l-9.5,-8 v4.8 h-9 v6.4 h9 v4.8z" fill="#b0b0b0"/><path d="M1634.5,204 V233" stroke="#b0b0b0" stroke-width="2.6"/><path d="M1628.5,210 L1634.5,203 L1640.5,210 M1628.5,227 L1634.5,234 L1640.5,227" fill="none" stroke="#b0b0b0" stroke-width="2.6"/><line x1="1643" y1="210.6" x2="1663" y2="210.6" stroke="#bcbcbc" stroke-width="1.1" /><line x1="1643" y1="214.7" x2="1663" y2="214.7" stroke="#bcbcbc" stroke-width="1.1" /><line x1="1643" y1="218.8" x2="1663" y2="218.8" stroke="#bcbcbc" stroke-width="1.1" /><line x1="1643" y1="222.9" x2="1663" y2="222.9" stroke="#bcbcbc" stroke-width="1.1" /><line x1="1643" y1="227" x2="1663" y2="227" stroke="#bcbcbc" stroke-width="1.1" /><path d="M1674.0,216.05 h9 l-4.5,4.5 z" fill="#c4c4c4"/><line x1="1708" y1="174" x2="1708" y2="220" stroke="#bcbcbc" stroke-width="1.2" /><path d="M1705.7,217.5 L1708,221 L1710.3,217.5" fill="none" stroke="#bcbcbc" stroke-width="1.1"/><line x1="1716" y1="174" x2="1716" y2="220" stroke="#bcbcbc" stroke-width="1.2" /><path d="M1713.7,217.5 L1716,221 L1718.3,217.5" fill="none" stroke="#bcbcbc" stroke-width="1.1"/><line x1="1724" y1="174" x2="1724" y2="220" stroke="#bcbcbc" stroke-width="1.2" /><path d="M1721.7,217.5 L1724,221 L1726.3,217.5" fill="none" stroke="#bcbcbc" stroke-width="1.1"/><line x1="1732" y1="199" x2="1732" y2="220" stroke="#bcbcbc" stroke-width="1.2" /><path d="M1729.7,217.5 L1732,221 L1734.3,217.5" fill="none" stroke="#bcbcbc" stroke-width="1.1"/><line x1="1740" y1="199" x2="1740" y2="220" stroke="#bcbcbc" stroke-width="1.2" /><path d="M1737.7,217.5 L1740,221 L1742.3,217.5" fill="none" stroke="#bcbcbc" stroke-width="1.1"/><line x1="1748" y1="199" x2="1748" y2="220" stroke="#bcbcbc" stroke-width="1.2" /><path d="M1745.7,217.5 L1748,221 L1750.3,217.5" fill="none" stroke="#bcbcbc" stroke-width="1.1"/><path d="M1756.8,194.05 h9 l-4.5,4.5 z" fill="#c4c4c4"/><rect x="1707.5" y="247.7" width="41.0" height="31.30000000000001" fill="#f4f4f4" stroke="#bcbcbc" stroke-width="1.2" rx="0" stroke-dasharray="1.2 1.2"/><line x1="1715" y1="259" x2="1742" y2="259" stroke="#c8c8c8" stroke-width="1" /><line x1="1715" y1="263" x2="1742" y2="263" stroke="#c8c8c8" stroke-width="1" /><line x1="1715" y1="267" x2="1742" y2="267" stroke="#c8c8c8" stroke-width="1" /><path d="M1728,241.5 V256 M1728,271 V285.5" stroke="#b0b0b0" stroke-width="2.6"/><path d="M1722,247.5 L1728,240.8 L1734,247.5 M1722,279.5 L1728,286.2 L1734,279.5" fill="none" stroke="#b0b0b0" stroke-width="2.6"/><path d="M1756.8,260.75 h9 l-4.5,4.5 z" fill="#c4c4c4"/><path d="M1706,313.3 H1735 L1744,325 L1735,338 H1706 L1714.5,325.5z" fill="#c2c2c2"/><rect x="1720.5" y="326.5" width="29.200000000000045" height="20.0" fill="#f6f6f6" stroke="#b8b8b8" stroke-width="1.2" rx="0" /><line x1="1730" y1="332" x2="1745" y2="332" stroke="#c4c4c4" stroke-width="1" /><line x1="1730" y1="336.5" x2="1745" y2="336.5" stroke="#c4c4c4" stroke-width="1" /><line x1="1730" y1="341" x2="1745" y2="341" stroke="#c4c4c4" stroke-width="1" /><line x1="1725" y1="332" x2="1727.5" y2="332" stroke="#c4c4c4" stroke-width="1" /><line x1="1725" y1="336.5" x2="1727.5" y2="336.5" stroke="#c4c4c4" stroke-width="1" /><line x1="1725" y1="341" x2="1727.5" y2="341" stroke="#c4c4c4" stroke-width="1" /><path d="M1756.8,327.05 h9 l-4.5,4.5 z" fill="#c4c4c4"/><line x1="1308.8" y1="294" x2="1345" y2="294" stroke="#bcbcbc" stroke-width="1.1" /><line x1="1383" y1="294" x2="1423" y2="294" stroke="#bcbcbc" stroke-width="1.1" /><line x1="1461" y1="294" x2="1497.3" y2="294" stroke="#bcbcbc" stroke-width="1.1" /><line x1="1308.8" y1="299.2" x2="1334.5" y2="299.2" stroke="#bcbcbc" stroke-width="1.1" /><line x1="1386.5" y1="299.2" x2="1419.5" y2="299.2" stroke="#bcbcbc" stroke-width="1.1" /><line x1="1471.5" y1="299.2" x2="1497.3" y2="299.2" stroke="#bcbcbc" stroke-width="1.1" /><line x1="1308.8" y1="304.4" x2="1345" y2="304.4" stroke="#bcbcbc" stroke-width="1.1" /><line x1="1383" y1="304.4" x2="1423" y2="304.4" stroke="#bcbcbc" stroke-width="1.1" /><line x1="1461" y1="304.4" x2="1497.3" y2="304.4" stroke="#bcbcbc" stroke-width="1.1" /><line x1="1308.8" y1="309.6" x2="1334.5" y2="309.6" stroke="#bcbcbc" stroke-width="1.1" /><line x1="1386.5" y1="309.6" x2="1419.5" y2="309.6" stroke="#bcbcbc" stroke-width="1.1" /><line x1="1471.5" y1="309.6" x2="1497.3" y2="309.6" stroke="#bcbcbc" stroke-width="1.1" /><line x1="1308.8" y1="314.8" x2="1345" y2="314.8" stroke="#bcbcbc" stroke-width="1.1" /><line x1="1383" y1="314.8" x2="1423" y2="314.8" stroke="#bcbcbc" stroke-width="1.1" /><line x1="1461" y1="314.8" x2="1497.3" y2="314.8" stroke="#bcbcbc" stroke-width="1.1" /><line x1="1308.8" y1="320" x2="1334.5" y2="320" stroke="#bcbcbc" stroke-width="1.1" /><line x1="1386.5" y1="320" x2="1419.5" y2="320" stroke="#bcbcbc" stroke-width="1.1" /><line x1="1471.5" y1="320" x2="1497.3" y2="320" stroke="#bcbcbc" stroke-width="1.1" /><line x1="1538.8" y1="296" x2="1571.2" y2="296" stroke="#bcbcbc" stroke-width="1.1" /><line x1="1538.8" y1="300.2" x2="1571.2" y2="300.2" stroke="#bcbcbc" stroke-width="1.1" /><line x1="1538.8" y1="304.4" x2="1571.2" y2="304.4" stroke="#bcbcbc" stroke-width="1.1" /><line x1="1538.8" y1="308.6" x2="1571.2" y2="308.6" stroke="#bcbcbc" stroke-width="1.1" /><line x1="1538.8" y1="312.8" x2="1571.2" y2="312.8" stroke="#bcbcbc" stroke-width="1.1" /><line x1="1538.8" y1="317" x2="1571.2" y2="317" stroke="#bcbcbc" stroke-width="1.1" /><rect x="1615.3" y="287.3" width="32.40000000000009" height="41.19999999999999" fill="#f6f6f6" stroke="#bcbcbc" stroke-width="1.2" rx="0" /><line x1="1619.5" y1="297" x2="1629.5" y2="297" stroke="#c0c0c0" stroke-width="1.1" /><line x1="1619.5" y1="301.5" x2="1629.5" y2="301.5" stroke="#c0c0c0" stroke-width="1.1" /><line x1="1619.5" y1="306" x2="1629.5" y2="306" stroke="#c0c0c0" stroke-width="1.1" /><line x1="1619.5" y1="310.5" x2="1629.5" y2="310.5" stroke="#c0c0c0" stroke-width="1.1" /><line x1="1619.5" y1="315" x2="1629.5" y2="315" stroke="#c0c0c0" stroke-width="1.1" /><line x1="1619.5" y1="319.5" x2="1629.5" y2="319.5" stroke="#c0c0c0" stroke-width="1.1" /><line x1="1633.5" y1="297" x2="1643.5" y2="297" stroke="#c0c0c0" stroke-width="1.1" /><line x1="1633.5" y1="301.5" x2="1643.5" y2="301.5" stroke="#c0c0c0" stroke-width="1.1" /><line x1="1633.5" y1="306" x2="1643.5" y2="306" stroke="#c0c0c0" stroke-width="1.1" /><line x1="1633.5" y1="310.5" x2="1643.5" y2="310.5" stroke="#c0c0c0" stroke-width="1.1" /><line x1="1633.5" y1="315" x2="1643.5" y2="315" stroke="#c0c0c0" stroke-width="1.1" /><line x1="1633.5" y1="319.5" x2="1643.5" y2="319.5" stroke="#c0c0c0" stroke-width="1.1" /><path d="M1660.3,304.75 h9 l-4.5,4.5 z" fill="#c4c4c4"/><rect x="1811.5" y="198.5" width="18.5" height="30.0" fill="#fff" stroke="#777" stroke-width="1.2" rx="0" /><line x1="1814.5" y1="216.5" x2="1827" y2="216.5" stroke="#999" stroke-width="1" /><line x1="1814.5" y1="220" x2="1827" y2="220" stroke="#999" stroke-width="1" /><line x1="1814.5" y1="223.5" x2="1827" y2="223.5" stroke="#999" stroke-width="1" /><path d="M1812,305.5 L1823.5,286.5 L1835,305.5z" fill="#fff" stroke="#777" stroke-width="1.3" /><path d="M2263,247 h18 l-9,9z" fill="#777"/><rect x="2345" y="192" width="43.8" height="43.8" fill="#edc67a"/><rect x="2332.3" y="179.5" width="31.299999999999727" height="30.80000000000001" fill="#fdfdfd" stroke="#8a8a8a" stroke-width="1.2" rx="0" /><rect x="2370.3" y="217.8" width="31.299999999999727" height="30.69999999999999" fill="#fdfdfd" stroke="#8a8a8a" stroke-width="1.2" rx="0" /><path d="M2363.0,322.25 h9 l-4.5,4.5 z" fill="#555"/><rect x="2449.5" y="182.3" width="63.30000000000018" height="63.19999999999999" fill="#fdfdfd" stroke="#8a8a8a" stroke-width="1.2" rx="13" /><path d="M2520.5,199.5 V217 L2504,236 L2494.5,227.5 z" fill="#7d7d7d"/><path d="M2499.5,220.5 L2510,230" stroke="#f1f1f1" stroke-width="2.2"/><path d="M2466,253.5 C2474,247 2478,240 2484,234.5 C2489,231 2496,233 2498,238.5 C2499.5,244 2494,251 2486,253 z" fill="#4a7ebb"/><path d="M2484.5,235.5 C2489,232.5 2495.5,234 2497,239 C2498,243 2495.5,247.5 2491.5,250.5 C2493,244 2490,239.5 2484.5,235.5z" fill="#fff" stroke="#4a7ebb" stroke-width="1"/><path d="M2518.5,322.25 h9 l-4.5,4.5 z" fill="#555"/><rect x="2548" y="205" width="50" height="11.8" fill="#e9714a"/><path d="M2585.5,185 C2591.5,185.5 2594.5,191 2592,197 C2591,200 2589.5,202.5 2588.8,204.8 L2587,204.8 C2588.5,198 2589,192 2585.5,188z" fill="#4a7ebb"/><path d="M2557.3,191.5 L2575.3,175.3 L2588,188.2 L2571.5,204.6 z" fill="#fefefe" stroke="#6e6e6e" stroke-width="1.2"/><circle cx="2575.2" cy="185.4" r="2.4" fill="#7a7a7a"/><path d="M2575.3,185 V174 a4.4,4.6 0 0 0 -8.8,0 V181.5" fill="none" stroke="#6e6e6e" stroke-width="1.2"/><path d="M2738.0,185.75 h9 l-4.5,4.5 z" fill="#555"/><rect x="2548" y="267" width="50" height="11.8" fill="#4a7ebb"/><path d="M2587.5,234 H2549.7 V264.3 H2560" fill="none" stroke="#777" stroke-width="1.2"/><path d="M2566.5,258 L2589.5,235 L2594.3,239.8 L2571.3,262.8 z" fill="#4a7ebb"/><path d="M2565.5,259.5 L2570,264 L2563.5,265.8z" fill="#4a7ebb"/><path d="M2586.5,238 L2591.3,242.8" stroke="#f1f1f1" stroke-width="1.2"/><path d="M2798.8,247.75 h9 l-4.5,4.5 z" fill="#555"/><path d="M2560,321.2 H2580 L2585.8,329 a3,3 0 0 1 -1.8,0.8 L2568.5,330.2 a4.5,4.5 0 0 1 -3.3,-1.3 L2560,322.8z" fill="#7d7d7d"/><path d="M2587.6,302.3 L2593.6,308.6 a2.5,2.5 0 0 1 0.4,2.6 L2587,328 a3,3 0 0 1 -1.3,1.3 L2579.8,321 z" fill="#a6a6a6"/><path d="M2568.7,301.9 H2585.8 a2,2 0 0 1 1.9,2.8 L2580.6,319.6 a2.6,2.6 0 0 1 -2.3,1.6 H2561.4 a1.6,1.6 0 0 1 -1.5,-2.3 L2566.5,303.4 a2.4,2.4 0 0 1 2.2,-1.5z" fill="#fefefe" stroke="#8a8a8a" stroke-width="1.1"/><path d="M2791.0,312.75 h9 l-4.5,4.5 z" fill="#555"/><circle cx="2873.8" cy="187" r="13.2" fill="#fdfdfd" stroke="#4a7ebb" stroke-width="3.6"/><path d="M2863.5,197.5 L2851.5,209" stroke="#4a7ebb" stroke-width="6" stroke-linecap="round"/><path d="M2846.3,260 C2846.3,265 2848,266.4 2852,266.4 H2859 M2853.5,260.3 L2860.3,266.4 L2853,272.6" fill="none" stroke="#4a7ebb" stroke-width="2.8"/><path d="M3020.3,251.15 h9 l-4.5,4.5 z" fill="#555"/><path d="M2858.3,295.5 V329 L2866,322 L2872,336.5 L2877.5,334 L2871.5,320 L2884,320 z" fill="#fdfdfd" stroke="#777" stroke-width="1.3" stroke-linejoin="miter"/><path d="M2987.2,312.75 h9 l-4.5,4.5 z" fill="#555"/></svg><div class="t" style="left:30.50px;top:693.23px;font-size:36px;color:#444;transform:scaleX(0.8493);">2</div><div class="t" style="left:30.50px;top:937.03px;font-size:36px;color:#444;transform:scaleX(0.8243);">3</div><div class="t" style="left:29.50px;top:1179.53px;font-size:36px;color:#c8401f;transform:scaleX(0.9243);">4</div><div class="r" style="left:86.3px;top:456px;width:341px;height:193.3px;background:#fff;border:1.4px solid #c6c6c6;box-sizing:border-box;"></div><div class="r" style="left:86.3px;top:700px;width:341px;height:193.3px;background:#fff;border:1.4px solid #c6c6c6;box-sizing:border-box;"></div><div class="r" style="left:86.3px;top:944px;width:341px;height:193.3px;background:#fff;border:1.4px solid #c6c6c6;box-sizing:border-box;"></div><div class="r" style="left:85px;top:1186px;width:344px;height:197px;background:#fff;border:3px solid #e9714a;box-sizing:border-box;"></div><div class="r" style="left:1047.5px;top:413px;width:1598px;height:36.5px;background:#fefefe;"></div><div class="r" style="left:489px;top:587.5px;width:37px;height:898.5px;background:#fefefe;"></div><div class="t" style="left:1078.35px;top:418.49px;font-size:26px;color:#444;transform:scaleX(0.93);">16</div><div class="t" style="left:1125.60px;top:418.49px;font-size:26px;color:#444;transform:scaleX(0.93);">15</div><div class="t" style="left:1172.85px;top:418.49px;font-size:26px;color:#444;transform:scaleX(0.93);">14</div><div class="t" style="left:1220.10px;top:418.49px;font-size:26px;color:#444;transform:scaleX(0.93);">13</div><div class="t" style="left:1267.35px;top:418.49px;font-size:26px;color:#444;transform:scaleX(0.93);">12</div><div class="t" style="left:1315.50px;top:418.49px;font-size:26px;color:#444;transform:scaleX(0.93);">11</div><div class="t" style="left:1361.85px;top:418.49px;font-size:26px;color:#444;transform:scaleX(0.93);">10</div><div class="t" style="left:1415.83px;top:418.49px;font-size:26px;color:#444;transform:scaleX(0.93);">9</div><div class="t" style="left:1463.08px;top:418.49px;font-size:26px;color:#444;transform:scaleX(0.93);">8</div><div class="t" style="left:1510.33px;top:418.49px;font-size:26px;color:#444;transform:scaleX(0.93);">7</div><div class="t" style="left:1557.58px;top:418.49px;font-size:26px;color:#444;transform:scaleX(0.93);">6</div><div class="t" style="left:1604.83px;top:418.49px;font-size:26px;color:#444;transform:scaleX(0.93);">5</div><div class="t" style="left:1652.08px;top:418.49px;font-size:26px;color:#444;transform:scaleX(0.93);">4</div><div class="t" style="left:1699.33px;top:418.49px;font-size:26px;color:#444;transform:scaleX(0.93);">3</div><div class="t" style="left:1746.58px;top:418.49px;font-size:26px;color:#444;transform:scaleX(0.93);">2</div><div class="t" style="left:1793.83px;top:418.49px;font-size:26px;color:#444;transform:scaleX(0.93);">1</div><div class="t" style="left:2266.33px;top:418.49px;font-size:26px;color:#444;transform:scaleX(0.93);">9</div><div class="t" style="left:2306.85px;top:418.49px;font-size:26px;color:#444;transform:scaleX(0.93);">10</div><div class="t" style="left:2355.00px;top:418.49px;font-size:26px;color:#444;transform:scaleX(0.93);">11</div><div class="t" style="left:2401.35px;top:418.49px;font-size:26px;color:#444;transform:scaleX(0.93);">12</div><div class="t" style="left:2448.60px;top:418.49px;font-size:26px;color:#444;transform:scaleX(0.93);">13</div><div class="t" style="left:2495.85px;top:418.49px;font-size:26px;color:#444;transform:scaleX(0.93);">14</div><div class="t" style="left:2543.10px;top:418.49px;font-size:26px;color:#444;transform:scaleX(0.93);">15</div><div class="t" style="left:2590.35px;top:418.49px;font-size:26px;color:#444;transform:scaleX(0.93);">16</div><div class="t" style="left:509.49px;top:618.97px;font-size:26px;color:#444;transform:rotate(-90deg) scaleX(0.93);transform-origin:0 0;line-height:0;height:0">9</div><div class="t" style="left:509.49px;top:666.22px;font-size:26px;color:#444;transform:rotate(-90deg) scaleX(0.93);transform-origin:0 0;line-height:0;height:0">8</div><div class="t" style="left:509.49px;top:713.47px;font-size:26px;color:#444;transform:rotate(-90deg) scaleX(0.93);transform-origin:0 0;line-height:0;height:0">7</div><div class="t" style="left:509.49px;top:760.72px;font-size:26px;color:#444;transform:rotate(-90deg) scaleX(0.93);transform-origin:0 0;line-height:0;height:0">6</div><div class="t" style="left:509.49px;top:807.97px;font-size:26px;color:#444;transform:rotate(-90deg) scaleX(0.93);transform-origin:0 0;line-height:0;height:0">5</div><div class="t" style="left:509.49px;top:855.22px;font-size:26px;color:#444;transform:rotate(-90deg) scaleX(0.93);transform-origin:0 0;line-height:0;height:0">4</div><div class="t" style="left:509.49px;top:902.47px;font-size:26px;color:#444;transform:rotate(-90deg) scaleX(0.93);transform-origin:0 0;line-height:0;height:0">3</div><div class="t" style="left:509.49px;top:949.72px;font-size:26px;color:#444;transform:rotate(-90deg) scaleX(0.93);transform-origin:0 0;line-height:0;height:0">2</div><div class="t" style="left:509.49px;top:996.97px;font-size:26px;color:#444;transform:rotate(-90deg) scaleX(0.93);transform-origin:0 0;line-height:0;height:0">1</div><div class="t" style="left:509.49px;top:1044.22px;font-size:26px;color:#444;transform:rotate(-90deg) scaleX(0.93);transform-origin:0 0;line-height:0;height:0">0</div><div class="t" style="left:509.49px;top:1091.47px;font-size:26px;color:#444;transform:rotate(-90deg) scaleX(0.93);transform-origin:0 0;line-height:0;height:0">1</div><div class="t" style="left:509.49px;top:1138.72px;font-size:26px;color:#444;transform:rotate(-90deg) scaleX(0.93);transform-origin:0 0;line-height:0;height:0">2</div><div class="t" style="left:509.49px;top:1185.97px;font-size:26px;color:#444;transform:rotate(-90deg) scaleX(0.93);transform-origin:0 0;line-height:0;height:0">3</div><div class="t" style="left:509.49px;top:1233.22px;font-size:26px;color:#444;transform:rotate(-90deg) scaleX(0.93);transform-origin:0 0;line-height:0;height:0">4</div><div class="t" style="left:509.49px;top:1280.47px;font-size:26px;color:#444;transform:rotate(-90deg) scaleX(0.93);transform-origin:0 0;line-height:0;height:0">5</div><div class="t" style="left:509.49px;top:1327.72px;font-size:26px;color:#444;transform:rotate(-90deg) scaleX(0.93);transform-origin:0 0;line-height:0;height:0">6</div><div class="t" style="left:509.49px;top:1374.97px;font-size:26px;color:#444;transform:rotate(-90deg) scaleX(0.93);transform-origin:0 0;line-height:0;height:0">7</div><div class="t" style="left:509.49px;top:1422.22px;font-size:26px;color:#444;transform:rotate(-90deg) scaleX(0.93);transform-origin:0 0;line-height:0;height:0">8</div><div class="t" style="left:509.49px;top:1469.47px;font-size:26px;color:#444;transform:rotate(-90deg) scaleX(0.93);transform-origin:0 0;line-height:0;height:0">9</div><div class="r" style="left:1045px;top:586px;width:1602px;height:901.5px;background:#fff;border:1.2px solid #c6c6c6;box-sizing:border-box;"></div><div class="t" style="left:14.00px;top:1646.70px;font-size:29.3px;color:#4c4c4c;transform:scaleX(0.8937);">Slide 4 of 4</div><div class="t" style="left:258.50px;top:1646.70px;font-size:29.3px;color:#4c4c4c;transform:scaleX(0.8810);">English (United States)</div><div class="t" style="left:2308.00px;top:1646.70px;font-size:29.3px;color:#4c4c4c;transform:scaleX(0.8951);">Notes</div><div class="t" style="left:3061.50px;top:1647.20px;font-size:29.3px;color:#4c4c4c;transform:scaleX(0.8443);">50%</div><div class="r" style="left:2412px;top:1620.5px;width:76px;height:78.2px;background:#c8c8c8;"></div><svg class="s" width="3197" height="1702" viewBox="0 0 3197 1702" style=""><circle cx="165.3" cy="490.3" r="7.2" fill="#92dc28" stroke="none" stroke-width="1.5"/><line x1="176.70" y1="490.30" x2="178.80" y2="490.30" stroke="#92dc28" stroke-width="2.6" stroke-linecap="round"/><line x1="173.36" y1="498.36" x2="174.85" y2="499.85" stroke="#92dc28" stroke-width="2.6" stroke-linecap="round"/><line x1="165.30" y1="501.70" x2="165.30" y2="503.80" stroke="#92dc28" stroke-width="2.6" stroke-linecap="round"/><line x1="157.24" y1="498.36" x2="155.75" y2="499.85" stroke="#92dc28" stroke-width="2.6" stroke-linecap="round"/><line x1="153.90" y1="490.30" x2="151.80" y2="490.30" stroke="#92dc28" stroke-width="2.6" stroke-linecap="round"/><line x1="157.24" y1="482.24" x2="155.75" y2="480.75" stroke="#92dc28" stroke-width="2.6" stroke-linecap="round"/><line x1="165.30" y1="478.90" x2="165.30" y2="476.80" stroke="#92dc28" stroke-width="2.6" stroke-linecap="round"/><line x1="173.36" y1="482.24" x2="174.85" y2="480.75" stroke="#92dc28" stroke-width="2.6" stroke-linecap="round"/><circle cx="292.3" cy="489.1" r="7.5" fill="#ffd940" stroke="none" stroke-width="1.5"/><line x1="303.70" y1="489.10" x2="305.80" y2="489.10" stroke="#ffd940" stroke-width="2.6" stroke-linecap="round"/><line x1="300.36" y1="497.16" x2="301.85" y2="498.65" stroke="#ffd940" stroke-width="2.6" stroke-linecap="round"/><line x1="292.30" y1="500.50" x2="292.30" y2="502.60" stroke="#ffd940" stroke-width="2.6" stroke-linecap="round"/><line x1="284.24" y1="497.16" x2="282.75" y2="498.65" stroke="#ffd940" stroke-width="2.6" stroke-linecap="round"/><line x1="280.90" y1="489.10" x2="278.80" y2="489.10" stroke="#ffd940" stroke-width="2.6" stroke-linecap="round"/><line x1="284.24" y1="481.04" x2="282.75" y2="479.55" stroke="#ffd940" stroke-width="2.6" stroke-linecap="round"/><line x1="292.30" y1="477.70" x2="292.30" y2="475.60" stroke="#ffd940" stroke-width="2.6" stroke-linecap="round"/><line x1="300.36" y1="481.04" x2="301.85" y2="479.55" stroke="#ffd940" stroke-width="2.6" stroke-linecap="round"/><g clip-path="url(#ct1)"><circle cx="410.4" cy="491.7" r="7" fill="#e8141c" stroke="none" stroke-width="1.5"/><line x1="421.80" y1="491.70" x2="423.90" y2="491.70" stroke="#e8141c" stroke-width="2.6" stroke-linecap="round"/><line x1="418.46" y1="499.76" x2="419.95" y2="501.25" stroke="#e8141c" stroke-width="2.6" stroke-linecap="round"/><line x1="410.40" y1="503.10" x2="410.40" y2="505.20" stroke="#e8141c" stroke-width="2.6" stroke-linecap="round"/><line x1="402.34" y1="499.76" x2="400.85" y2="501.25" stroke="#e8141c" stroke-width="2.6" stroke-linecap="round"/><line x1="399.00" y1="491.70" x2="396.90" y2="491.70" stroke="#e8141c" stroke-width="2.6" stroke-linecap="round"/><line x1="402.34" y1="483.64" x2="400.85" y2="482.15" stroke="#e8141c" stroke-width="2.6" stroke-linecap="round"/><line x1="410.40" y1="480.30" x2="410.40" y2="478.20" stroke="#e8141c" stroke-width="2.6" stroke-linecap="round"/><line x1="418.46" y1="483.64" x2="419.95" y2="482.15" stroke="#e8141c" stroke-width="2.6" stroke-linecap="round"/></g><rect x="108.5" y="518.3" width="20.6" height="5.4" fill="#8fe01f"/><rect x="131.9" y="518.3" width="20.2" height="5.4" fill="#8fe01f"/><rect x="155.1" y="518.3" width="20.9" height="5.4" fill="#8fe01f"/><rect x="178.4" y="518.3" width="20.6" height="5.4" fill="#8fe01f"/><rect x="201.6" y="518.3" width="21.1" height="5.4" fill="#fffdf2" stroke="#f3ecc8" stroke-width="0.6"/><rect x="207.1" y="520.5" width="10" height="1" fill="#999"/><rect x="108.2" y="525.4" width="114.5" height="9.5" fill="#3b3b3b"/><rect x="233.9" y="517.9" width="21.3" height="5.2" fill="#8fe01f"/><rect x="257.8" y="517.9" width="21.3" height="5.2" fill="#8fe01f"/><rect x="282" y="517.9" width="21.0" height="5.2" fill="#8fe01f"/><rect x="305.7" y="517.9" width="21.0" height="5.2" fill="#8fe01f"/><rect x="329.6" y="517.9" width="21.0" height="5.2" fill="#fffdf2" stroke="#f3ecc8" stroke-width="0.6"/><rect x="335.1" y="520.1" width="10" height="1" fill="#999"/><rect x="233.9" y="525" width="116.7" height="9.9" fill="#3b3b3b"/><rect x="356.3" y="518" width="19.5" height="5.1" fill="#8fe01f"/><rect x="378.7" y="518" width="19.2" height="5.1" fill="#8fe01f"/><rect x="400.7" y="518" width="19.2" height="5.1" fill="#8fe01f"/><rect x="422.7" y="518" width="2.6" height="5.1" fill="#8fe01f"/><rect x="356.3" y="525" width="69.0" height="8.6" fill="#3b3b3b"/><rect x="155" y="508.8" width="21.0" height="6.2" rx="1.2" fill="#b0b0b0"/><rect x="157.5" y="511.3" width="16.0" height="1.2" fill="#d8d8d8"/><rect x="281.7" y="508" width="21.3" height="6.0" rx="1.2" fill="#b0b0b0"/><rect x="284.2" y="510.4" width="16.3" height="1.2" fill="#d8d8d8"/><rect x="400.3" y="509.3" width="20.6" height="5.7" rx="1.2" fill="#b0b0b0"/><rect x="402.8" y="511.5" width="15.6" height="1.2" fill="#d8d8d8"/><circle cx="151.5" cy="532.6" r="1.45" fill="#8fe01f" stroke="none" stroke-width="1.5"/><circle cx="155.45" cy="532.6" r="1.45" fill="#4a86d8" stroke="none" stroke-width="1.5"/><circle cx="159.4" cy="532.6" r="1.45" fill="#4a86d8" stroke="none" stroke-width="1.5"/><circle cx="163.35" cy="532.6" r="1.45" fill="#ffd940" stroke="none" stroke-width="1.5"/><circle cx="167.3" cy="532.6" r="1.45" fill="#e8141c" stroke="none" stroke-width="1.5"/><circle cx="171.25" cy="532.6" r="1.45" fill="#ffffff" stroke="none" stroke-width="1.5"/><circle cx="175.2" cy="532.6" r="1.45" fill="#000000" stroke="none" stroke-width="1.5"/><circle cx="179.15" cy="532.6" r="1.45" fill="#e9914a" stroke="none" stroke-width="1.5"/><circle cx="278.0" cy="532.4" r="1.45" fill="#8fe01f" stroke="none" stroke-width="1.5"/><circle cx="281.95" cy="532.4" r="1.45" fill="#4a86d8" stroke="none" stroke-width="1.5"/><circle cx="285.9" cy="532.4" r="1.45" fill="#4a86d8" stroke="none" stroke-width="1.5"/><circle cx="289.85" cy="532.4" r="1.45" fill="#ffd940" stroke="none" stroke-width="1.5"/><circle cx="293.8" cy="532.4" r="1.45" fill="#e8141c" stroke="none" stroke-width="1.5"/><circle cx="297.75" cy="532.4" r="1.45" fill="#ffffff" stroke="none" stroke-width="1.5"/><circle cx="301.7" cy="532.4" r="1.45" fill="#000000" stroke="none" stroke-width="1.5"/><circle cx="305.65" cy="532.4" r="1.45" fill="#e9914a" stroke="none" stroke-width="1.5"/><circle cx="397.5" cy="531.8" r="1.45" fill="#8fe01f" stroke="none" stroke-width="1.5"/><circle cx="401.45" cy="531.8" r="1.45" fill="#4a86d8" stroke="none" stroke-width="1.5"/><circle cx="405.4" cy="531.8" r="1.45" fill="#4a86d8" stroke="none" stroke-width="1.5"/><circle cx="409.35" cy="531.8" r="1.45" fill="#ffd940" stroke="none" stroke-width="1.5"/><circle cx="413.3" cy="531.8" r="1.45" fill="#e8141c" stroke="none" stroke-width="1.5"/><circle cx="417.25" cy="531.8" r="1.45" fill="#ffffff" stroke="none" stroke-width="1.5"/><circle cx="421.2" cy="531.8" r="1.45" fill="#000000" stroke="none" stroke-width="1.5"/><line x1="145" y1="531" x2="151" y2="533" stroke="#c03020" stroke-width="0.8" /><line x1="277" y1="531" x2="284" y2="532.5" stroke="#c03020" stroke-width="0.8" /><g clip-path="url(#ct2)"><circle cx="256.7" cy="863.5" r="42" fill="#ffd940" stroke="none" stroke-width="1.5"/><line x1="319.00" y1="863.50" x2="332.00" y2="863.50" stroke="#ffd940" stroke-width="16.5" stroke-linecap="round"/><line x1="300.75" y1="907.55" x2="309.95" y2="916.75" stroke="#ffd940" stroke-width="16.5" stroke-linecap="round"/><line x1="256.70" y1="925.80" x2="256.70" y2="938.80" stroke="#ffd940" stroke-width="16.5" stroke-linecap="round"/><line x1="212.65" y1="907.55" x2="203.45" y2="916.75" stroke="#ffd940" stroke-width="16.5" stroke-linecap="round"/><line x1="194.40" y1="863.50" x2="181.40" y2="863.50" stroke="#ffd940" stroke-width="16.5" stroke-linecap="round"/><line x1="212.65" y1="819.45" x2="203.45" y2="810.25" stroke="#ffd940" stroke-width="16.5" stroke-linecap="round"/><line x1="256.70" y1="801.20" x2="256.70" y2="788.20" stroke="#ffd940" stroke-width="16.5" stroke-linecap="round"/><line x1="300.75" y1="819.45" x2="309.95" y2="810.25" stroke="#ffd940" stroke-width="16.5" stroke-linecap="round"/></g><rect x="89" y="967.9" width="152.9" height="108.1" fill="#e3e3e3"/><rect x="89" y="967.9" width="152.9" height="9.2" fill="#b7472a"/><rect x="89" y="977.1" width="152.9" height="17.1" fill="#f1f1f1"/><rect x="89" y="1072.4" width="152.9" height="3.6" fill="#efefef"/><rect x="151.1" y="972" width="11.1" height="5.2" fill="#f1f1f1"/><rect x="104.5" y="1005.1" width="102.5" height="58.8" fill="#fff"/><g clip-path="url(#ct3)"><circle cx="155.8" cy="1055.3" r="12.8" fill="#ffd940" stroke="none" stroke-width="1.5"/><line x1="175.60" y1="1055.30" x2="178.90" y2="1055.30" stroke="#ffd940" stroke-width="5" stroke-linecap="round"/><line x1="169.80" y1="1069.30" x2="172.13" y2="1071.63" stroke="#ffd940" stroke-width="5" stroke-linecap="round"/><line x1="155.80" y1="1075.10" x2="155.80" y2="1078.40" stroke="#ffd940" stroke-width="5" stroke-linecap="round"/><line x1="141.80" y1="1069.30" x2="139.47" y2="1071.63" stroke="#ffd940" stroke-width="5" stroke-linecap="round"/><line x1="136.00" y1="1055.30" x2="132.70" y2="1055.30" stroke="#ffd940" stroke-width="5" stroke-linecap="round"/><line x1="141.80" y1="1041.30" x2="139.47" y2="1038.97" stroke="#ffd940" stroke-width="5" stroke-linecap="round"/><line x1="155.80" y1="1035.50" x2="155.80" y2="1032.20" stroke="#ffd940" stroke-width="5" stroke-linecap="round"/><line x1="169.80" y1="1041.30" x2="172.13" y2="1038.97" stroke="#ffd940" stroke-width="5" stroke-linecap="round"/></g><rect x="129.8" y="1028.8" width="52.19999999999999" height="35.200000000000045" fill="none" stroke="#c9c9c9" stroke-width="0.7" rx="0" /><line x1="155.2" y1="975" x2="152.3" y2="994" stroke="#d9402a" stroke-width="1.1" /><rect x="90.7" y="980.7" width="5.6" height="4.8" fill="#8a9ab0"/><rect x="99.8" y="980.7" width="5.6" height="4.8" fill="#8a9ab0"/><rect x="108.9" y="980.7" width="5.6" height="4.8" fill="#8a9ab0"/><rect x="118.0" y="980.7" width="5.6" height="4.8" fill="#8a9ab0"/><rect x="127.1" y="980.7" width="5.6" height="4.8" fill="#8a9ab0"/><rect x="136.2" y="980.7" width="5.6" height="4.8" fill="#8a9ab0"/><rect x="145.3" y="980.7" width="5.6" height="4.8" fill="#444"/><rect x="157.5" y="979.0" width="12" height="1.6" fill="#b8c4d4"/><rect x="177" y="979.0" width="11" height="1.6" fill="#cfcfcf"/><rect x="197" y="979.0" width="9" height="1.6" fill="#cfcfcf"/><rect x="157.5" y="983.2" width="12" height="1.6" fill="#b8c4d4"/><rect x="177" y="983.2" width="11" height="1.6" fill="#cfcfcf"/><rect x="197" y="983.2" width="9" height="1.6" fill="#cfcfcf"/><rect x="157.5" y="987.4" width="12" height="1.6" fill="#b8c4d4"/><rect x="177" y="987.4" width="11" height="1.6" fill="#cfcfcf"/><rect x="197" y="987.4" width="9" height="1.6" fill="#cfcfcf"/><rect x="215" y="980" width="20" height="1.6" fill="#cfcfcf"/><rect x="215" y="986" width="20" height="1.6" fill="#cfcfcf"/><rect x="95.0" y="971.3" width="2.2" height="1.4" fill="#d98f7c"/><rect x="99.2" y="971.3" width="2.2" height="1.4" fill="#d98f7c"/><rect x="103.4" y="971.3" width="2.2" height="1.4" fill="#d98f7c"/><rect x="107.6" y="971.3" width="2.2" height="1.4" fill="#d98f7c"/><rect x="111.8" y="971.3" width="2.2" height="1.4" fill="#d98f7c"/><rect x="116.0" y="971.3" width="2.2" height="1.4" fill="#d98f7c"/><rect x="120.2" y="971.3" width="2.2" height="1.4" fill="#d98f7c"/><rect x="124.4" y="971.3" width="2.2" height="1.4" fill="#d98f7c"/><rect x="128.6" y="971.3" width="2.2" height="1.4" fill="#d98f7c"/><rect x="92.0" y="974.3" width="5" height="1.4" fill="#d98f7c"/><rect x="100.0" y="974.3" width="5" height="1.4" fill="#d98f7c"/><rect x="108.0" y="974.3" width="5" height="1.4" fill="#d98f7c"/><rect x="116.0" y="974.3" width="5" height="1.4" fill="#d98f7c"/><rect x="124.0" y="974.3" width="5" height="1.4" fill="#d98f7c"/><rect x="132.0" y="974.3" width="5" height="1.4" fill="#d98f7c"/><rect x="140.0" y="974.3" width="5" height="1.4" fill="#d98f7c"/><rect x="148.0" y="974.3" width="5" height="1.4" fill="#d98f7c"/><rect x="254.9" y="967.9" width="159" height="106.6" fill="#fff"/><rect x="254.9" y="967.9" width="159" height="6.7" fill="#b7472a"/><rect x="254.9" y="974.6" width="159" height="17.4" fill="#f3f3f3"/><rect x="254.9" y="992" width="10" height="82.5" fill="#d8d8d8"/><rect x="374.5" y="969.5" width="11" height="5.2" fill="#f3f3f3"/><rect x="258.0" y="970.7" width="6" height="1.5" fill="#d98f7c"/><rect x="269.5" y="970.7" width="6" height="1.5" fill="#d98f7c"/><rect x="281.0" y="970.7" width="6" height="1.5" fill="#d98f7c"/><rect x="292.5" y="970.7" width="6" height="1.5" fill="#d98f7c"/><rect x="304.0" y="970.7" width="6" height="1.5" fill="#d98f7c"/><rect x="315.5" y="970.7" width="6" height="1.5" fill="#d98f7c"/><rect x="327.0" y="970.7" width="6" height="1.5" fill="#d98f7c"/><rect x="338.5" y="970.7" width="6" height="1.5" fill="#d98f7c"/><rect x="350.0" y="970.7" width="6" height="1.5" fill="#d98f7c"/><rect x="361.5" y="970.7" width="6" height="1.5" fill="#d98f7c"/><rect x="310.0" y="977.5" width="5.6" height="4.6" fill="#7f92aa"/><rect x="319.6" y="977.5" width="5.6" height="4.6" fill="#7f92aa"/><rect x="329.1" y="977.5" width="5.6" height="4.6" fill="#7f92aa"/><rect x="338.6" y="977.5" width="5.6" height="4.6" fill="#7f92aa"/><rect x="348.2" y="977.5" width="5.6" height="4.6" fill="#7f92aa"/><rect x="357.8" y="977.5" width="5.6" height="4.6" fill="#7f92aa"/><rect x="367.3" y="977.5" width="5.6" height="4.6" fill="#333"/><rect x="256.5" y="976" width="5" height="5" fill="#5b86c4"/><rect x="266" y="976.3" width="14" height="1.5" fill="#cfcfcf"/><rect x="266" y="980.5" width="11" height="2.6" fill="#9bb4d8"/><rect x="285" y="976.3" width="20" height="1.5" fill="#cfcfcf"/><rect x="285" y="980.8" width="17" height="1.5" fill="#cfcfcf"/><rect x="381" y="976.3" width="16" height="1.5" fill="#cfcfcf"/><rect x="381" y="980.8" width="14" height="1.5" fill="#cfcfcf"/><rect x="401" y="976.3" width="12" height="1.5" fill="#dcdcdc"/><rect x="401" y="980.8" width="12" height="1.5" fill="#dcdcdc"/><g clip-path="url(#ct3b)"><rect x="269.2" y="993.5" width="26.30000000000001" height="26.299999999999955" fill="#fff" stroke="#d0d0d0" stroke-width="0.8" rx="0" /><g opacity="1"><circle cx="282.2" cy="1006.6" r="6.4" fill="#ffd940" stroke="none" stroke-width="1.5"/><line x1="292.10" y1="1006.60" x2="293.50" y2="1006.60" stroke="#ffd940" stroke-width="2.4" stroke-linecap="round"/><line x1="289.20" y1="1013.60" x2="290.19" y2="1014.59" stroke="#ffd940" stroke-width="2.4" stroke-linecap="round"/><line x1="282.20" y1="1016.50" x2="282.20" y2="1017.90" stroke="#ffd940" stroke-width="2.4" stroke-linecap="round"/><line x1="275.20" y1="1013.60" x2="274.21" y2="1014.59" stroke="#ffd940" stroke-width="2.4" stroke-linecap="round"/><line x1="272.30" y1="1006.60" x2="270.90" y2="1006.60" stroke="#ffd940" stroke-width="2.4" stroke-linecap="round"/><line x1="275.20" y1="999.60" x2="274.21" y2="998.61" stroke="#ffd940" stroke-width="2.4" stroke-linecap="round"/><line x1="282.20" y1="996.70" x2="282.20" y2="995.30" stroke="#ffd940" stroke-width="2.4" stroke-linecap="round"/><line x1="289.20" y1="999.60" x2="290.19" y2="998.61" stroke="#ffd940" stroke-width="2.4" stroke-linecap="round"/></g><g opacity="1"><circle cx="309.23" cy="1006.6" r="6.4" fill="#cdcdcd" stroke="none" stroke-width="1.5"/><line x1="319.13" y1="1006.60" x2="320.53" y2="1006.60" stroke="#cdcdcd" stroke-width="2.4" stroke-linecap="round"/><line x1="316.23" y1="1013.60" x2="317.22" y2="1014.59" stroke="#cdcdcd" stroke-width="2.4" stroke-linecap="round"/><line x1="309.23" y1="1016.50" x2="309.23" y2="1017.90" stroke="#cdcdcd" stroke-width="2.4" stroke-linecap="round"/><line x1="302.23" y1="1013.60" x2="301.24" y2="1014.59" stroke="#cdcdcd" stroke-width="2.4" stroke-linecap="round"/><line x1="299.33" y1="1006.60" x2="297.93" y2="1006.60" stroke="#cdcdcd" stroke-width="2.4" stroke-linecap="round"/><line x1="302.23" y1="999.60" x2="301.24" y2="998.61" stroke="#cdcdcd" stroke-width="2.4" stroke-linecap="round"/><line x1="309.23" y1="996.70" x2="309.23" y2="995.30" stroke="#cdcdcd" stroke-width="2.4" stroke-linecap="round"/><line x1="316.23" y1="999.60" x2="317.22" y2="998.61" stroke="#cdcdcd" stroke-width="2.4" stroke-linecap="round"/></g><g opacity="1"><circle cx="336.26" cy="1006.6" r="6.4" fill="#b89c90" stroke="none" stroke-width="1.5"/><line x1="346.16" y1="1006.60" x2="347.56" y2="1006.60" stroke="#b89c90" stroke-width="2.4" stroke-linecap="round"/><line x1="343.26" y1="1013.60" x2="344.25" y2="1014.59" stroke="#b89c90" stroke-width="2.4" stroke-linecap="round"/><line x1="336.26" y1="1016.50" x2="336.26" y2="1017.90" stroke="#b89c90" stroke-width="2.4" stroke-linecap="round"/><line x1="329.26" y1="1013.60" x2="328.27" y2="1014.59" stroke="#b89c90" stroke-width="2.4" stroke-linecap="round"/><line x1="326.36" y1="1006.60" x2="324.96" y2="1006.60" stroke="#b89c90" stroke-width="2.4" stroke-linecap="round"/><line x1="329.26" y1="999.60" x2="328.27" y2="998.61" stroke="#b89c90" stroke-width="2.4" stroke-linecap="round"/><line x1="336.26" y1="996.70" x2="336.26" y2="995.30" stroke="#b89c90" stroke-width="2.4" stroke-linecap="round"/><line x1="343.26" y1="999.60" x2="344.25" y2="998.61" stroke="#b89c90" stroke-width="2.4" stroke-linecap="round"/></g><g opacity="1"><circle cx="363.28999999999996" cy="1006.6" r="6.4" fill="#fff8d6" stroke="none" stroke-width="1.5"/><line x1="373.19" y1="1006.60" x2="374.59" y2="1006.60" stroke="#fff8d6" stroke-width="2.4" stroke-linecap="round"/><line x1="370.29" y1="1013.60" x2="371.28" y2="1014.59" stroke="#fff8d6" stroke-width="2.4" stroke-linecap="round"/><line x1="363.29" y1="1016.50" x2="363.29" y2="1017.90" stroke="#fff8d6" stroke-width="2.4" stroke-linecap="round"/><line x1="356.29" y1="1013.60" x2="355.30" y2="1014.59" stroke="#fff8d6" stroke-width="2.4" stroke-linecap="round"/><line x1="353.39" y1="1006.60" x2="351.99" y2="1006.60" stroke="#fff8d6" stroke-width="2.4" stroke-linecap="round"/><line x1="356.29" y1="999.60" x2="355.30" y2="998.61" stroke="#fff8d6" stroke-width="2.4" stroke-linecap="round"/><line x1="363.29" y1="996.70" x2="363.29" y2="995.30" stroke="#fff8d6" stroke-width="2.4" stroke-linecap="round"/><line x1="370.29" y1="999.60" x2="371.28" y2="998.61" stroke="#fff8d6" stroke-width="2.4" stroke-linecap="round"/></g><g opacity="1"><circle cx="282.2" cy="1033.3" r="6.4" fill="#9a9a9a" stroke="none" stroke-width="1.5"/><line x1="292.10" y1="1033.30" x2="293.50" y2="1033.30" stroke="#9a9a9a" stroke-width="2.4" stroke-linecap="round"/><line x1="289.20" y1="1040.30" x2="290.19" y2="1041.29" stroke="#9a9a9a" stroke-width="2.4" stroke-linecap="round"/><line x1="282.20" y1="1043.20" x2="282.20" y2="1044.60" stroke="#9a9a9a" stroke-width="2.4" stroke-linecap="round"/><line x1="275.20" y1="1040.30" x2="274.21" y2="1041.29" stroke="#9a9a9a" stroke-width="2.4" stroke-linecap="round"/><line x1="272.30" y1="1033.30" x2="270.90" y2="1033.30" stroke="#9a9a9a" stroke-width="2.4" stroke-linecap="round"/><line x1="275.20" y1="1026.30" x2="274.21" y2="1025.31" stroke="#9a9a9a" stroke-width="2.4" stroke-linecap="round"/><line x1="282.20" y1="1023.40" x2="282.20" y2="1022.00" stroke="#9a9a9a" stroke-width="2.4" stroke-linecap="round"/><line x1="289.20" y1="1026.30" x2="290.19" y2="1025.31" stroke="#9a9a9a" stroke-width="2.4" stroke-linecap="round"/></g><g opacity="1"><circle cx="309.23" cy="1033.3" r="6.4" fill="#3f78c8" stroke="none" stroke-width="1.5"/><line x1="319.13" y1="1033.30" x2="320.53" y2="1033.30" stroke="#3f78c8" stroke-width="2.4" stroke-linecap="round"/><line x1="316.23" y1="1040.30" x2="317.22" y2="1041.29" stroke="#3f78c8" stroke-width="2.4" stroke-linecap="round"/><line x1="309.23" y1="1043.20" x2="309.23" y2="1044.60" stroke="#3f78c8" stroke-width="2.4" stroke-linecap="round"/><line x1="302.23" y1="1040.30" x2="301.24" y2="1041.29" stroke="#3f78c8" stroke-width="2.4" stroke-linecap="round"/><line x1="299.33" y1="1033.30" x2="297.93" y2="1033.30" stroke="#3f78c8" stroke-width="2.4" stroke-linecap="round"/><line x1="302.23" y1="1026.30" x2="301.24" y2="1025.31" stroke="#3f78c8" stroke-width="2.4" stroke-linecap="round"/><line x1="309.23" y1="1023.40" x2="309.23" y2="1022.00" stroke="#3f78c8" stroke-width="2.4" stroke-linecap="round"/><line x1="316.23" y1="1026.30" x2="317.22" y2="1025.31" stroke="#3f78c8" stroke-width="2.4" stroke-linecap="round"/></g><g opacity="1"><circle cx="336.26" cy="1033.3" r="6.4" fill="#c96a48" stroke="none" stroke-width="1.5"/><line x1="346.16" y1="1033.30" x2="347.56" y2="1033.30" stroke="#c96a48" stroke-width="2.4" stroke-linecap="round"/><line x1="343.26" y1="1040.30" x2="344.25" y2="1041.29" stroke="#c96a48" stroke-width="2.4" stroke-linecap="round"/><line x1="336.26" y1="1043.20" x2="336.26" y2="1044.60" stroke="#c96a48" stroke-width="2.4" stroke-linecap="round"/><line x1="329.26" y1="1040.30" x2="328.27" y2="1041.29" stroke="#c96a48" stroke-width="2.4" stroke-linecap="round"/><line x1="326.36" y1="1033.30" x2="324.96" y2="1033.30" stroke="#c96a48" stroke-width="2.4" stroke-linecap="round"/><line x1="329.26" y1="1026.30" x2="328.27" y2="1025.31" stroke="#c96a48" stroke-width="2.4" stroke-linecap="round"/><line x1="336.26" y1="1023.40" x2="336.26" y2="1022.00" stroke="#c96a48" stroke-width="2.4" stroke-linecap="round"/><line x1="343.26" y1="1026.30" x2="344.25" y2="1025.31" stroke="#c96a48" stroke-width="2.4" stroke-linecap="round"/></g><g opacity="1"><circle cx="363.28999999999996" cy="1033.3" r="6.4" fill="#a6a6a6" stroke="none" stroke-width="1.5"/><line x1="373.19" y1="1033.30" x2="374.59" y2="1033.30" stroke="#a6a6a6" stroke-width="2.4" stroke-linecap="round"/><line x1="370.29" y1="1040.30" x2="371.28" y2="1041.29" stroke="#a6a6a6" stroke-width="2.4" stroke-linecap="round"/><line x1="363.29" y1="1043.20" x2="363.29" y2="1044.60" stroke="#a6a6a6" stroke-width="2.4" stroke-linecap="round"/><line x1="356.29" y1="1040.30" x2="355.30" y2="1041.29" stroke="#a6a6a6" stroke-width="2.4" stroke-linecap="round"/><line x1="353.39" y1="1033.30" x2="351.99" y2="1033.30" stroke="#a6a6a6" stroke-width="2.4" stroke-linecap="round"/><line x1="356.29" y1="1026.30" x2="355.30" y2="1025.31" stroke="#a6a6a6" stroke-width="2.4" stroke-linecap="round"/><line x1="363.29" y1="1023.40" x2="363.29" y2="1022.00" stroke="#a6a6a6" stroke-width="2.4" stroke-linecap="round"/><line x1="370.29" y1="1026.30" x2="371.28" y2="1025.31" stroke="#a6a6a6" stroke-width="2.4" stroke-linecap="round"/></g><g opacity="1"><circle cx="390.32" cy="1033.3" r="6.4" fill="#d8b82c" stroke="none" stroke-width="1.5"/><line x1="400.22" y1="1033.30" x2="401.62" y2="1033.30" stroke="#d8b82c" stroke-width="2.4" stroke-linecap="round"/><line x1="397.32" y1="1040.30" x2="398.31" y2="1041.29" stroke="#d8b82c" stroke-width="2.4" stroke-linecap="round"/><line x1="390.32" y1="1043.20" x2="390.32" y2="1044.60" stroke="#d8b82c" stroke-width="2.4" stroke-linecap="round"/><line x1="383.32" y1="1040.30" x2="382.33" y2="1041.29" stroke="#d8b82c" stroke-width="2.4" stroke-linecap="round"/><line x1="380.42" y1="1033.30" x2="379.02" y2="1033.30" stroke="#d8b82c" stroke-width="2.4" stroke-linecap="round"/><line x1="383.32" y1="1026.30" x2="382.33" y2="1025.31" stroke="#d8b82c" stroke-width="2.4" stroke-linecap="round"/><line x1="390.32" y1="1023.40" x2="390.32" y2="1022.00" stroke="#d8b82c" stroke-width="2.4" stroke-linecap="round"/><line x1="397.32" y1="1026.30" x2="398.31" y2="1025.31" stroke="#d8b82c" stroke-width="2.4" stroke-linecap="round"/></g><g opacity="1"><circle cx="417.35" cy="1033.3" r="6.4" fill="#3f78c8" stroke="none" stroke-width="1.5"/><line x1="427.25" y1="1033.30" x2="428.65" y2="1033.30" stroke="#3f78c8" stroke-width="2.4" stroke-linecap="round"/><line x1="424.35" y1="1040.30" x2="425.34" y2="1041.29" stroke="#3f78c8" stroke-width="2.4" stroke-linecap="round"/><line x1="417.35" y1="1043.20" x2="417.35" y2="1044.60" stroke="#3f78c8" stroke-width="2.4" stroke-linecap="round"/><line x1="410.35" y1="1040.30" x2="409.36" y2="1041.29" stroke="#3f78c8" stroke-width="2.4" stroke-linecap="round"/><line x1="407.45" y1="1033.30" x2="406.05" y2="1033.30" stroke="#3f78c8" stroke-width="2.4" stroke-linecap="round"/><line x1="410.35" y1="1026.30" x2="409.36" y2="1025.31" stroke="#3f78c8" stroke-width="2.4" stroke-linecap="round"/><line x1="417.35" y1="1023.40" x2="417.35" y2="1022.00" stroke="#3f78c8" stroke-width="2.4" stroke-linecap="round"/><line x1="424.35" y1="1026.30" x2="425.34" y2="1025.31" stroke="#3f78c8" stroke-width="2.4" stroke-linecap="round"/></g><g opacity="0.8"><circle cx="282.2" cy="1060.6" r="6.4" fill="#e6e6e6" stroke="none" stroke-width="1.5"/><line x1="292.10" y1="1060.60" x2="293.50" y2="1060.60" stroke="#e6e6e6" stroke-width="2.4" stroke-linecap="round"/><line x1="289.20" y1="1067.60" x2="290.19" y2="1068.59" stroke="#e6e6e6" stroke-width="2.4" stroke-linecap="round"/><line x1="282.20" y1="1070.50" x2="282.20" y2="1071.90" stroke="#e6e6e6" stroke-width="2.4" stroke-linecap="round"/><line x1="275.20" y1="1067.60" x2="274.21" y2="1068.59" stroke="#e6e6e6" stroke-width="2.4" stroke-linecap="round"/><line x1="272.30" y1="1060.60" x2="270.90" y2="1060.60" stroke="#e6e6e6" stroke-width="2.4" stroke-linecap="round"/><line x1="275.20" y1="1053.60" x2="274.21" y2="1052.61" stroke="#e6e6e6" stroke-width="2.4" stroke-linecap="round"/><line x1="282.20" y1="1050.70" x2="282.20" y2="1049.30" stroke="#e6e6e6" stroke-width="2.4" stroke-linecap="round"/><line x1="289.20" y1="1053.60" x2="290.19" y2="1052.61" stroke="#e6e6e6" stroke-width="2.4" stroke-linecap="round"/></g><g opacity="0.8"><circle cx="309.23" cy="1060.6" r="6.4" fill="#b9cbe6" stroke="none" stroke-width="1.5"/><line x1="319.13" y1="1060.60" x2="320.53" y2="1060.60" stroke="#b9cbe6" stroke-width="2.4" stroke-linecap="round"/><line x1="316.23" y1="1067.60" x2="317.22" y2="1068.59" stroke="#b9cbe6" stroke-width="2.4" stroke-linecap="round"/><line x1="309.23" y1="1070.50" x2="309.23" y2="1071.90" stroke="#b9cbe6" stroke-width="2.4" stroke-linecap="round"/><line x1="302.23" y1="1067.60" x2="301.24" y2="1068.59" stroke="#b9cbe6" stroke-width="2.4" stroke-linecap="round"/><line x1="299.33" y1="1060.60" x2="297.93" y2="1060.60" stroke="#b9cbe6" stroke-width="2.4" stroke-linecap="round"/><line x1="302.23" y1="1053.60" x2="301.24" y2="1052.61" stroke="#b9cbe6" stroke-width="2.4" stroke-linecap="round"/><line x1="309.23" y1="1050.70" x2="309.23" y2="1049.30" stroke="#b9cbe6" stroke-width="2.4" stroke-linecap="round"/><line x1="316.23" y1="1053.60" x2="317.22" y2="1052.61" stroke="#b9cbe6" stroke-width="2.4" stroke-linecap="round"/></g><g opacity="0.8"><circle cx="336.26" cy="1060.6" r="6.4" fill="#f0d6c2" stroke="none" stroke-width="1.5"/><line x1="346.16" y1="1060.60" x2="347.56" y2="1060.60" stroke="#f0d6c2" stroke-width="2.4" stroke-linecap="round"/><line x1="343.26" y1="1067.60" x2="344.25" y2="1068.59" stroke="#f0d6c2" stroke-width="2.4" stroke-linecap="round"/><line x1="336.26" y1="1070.50" x2="336.26" y2="1071.90" stroke="#f0d6c2" stroke-width="2.4" stroke-linecap="round"/><line x1="329.26" y1="1067.60" x2="328.27" y2="1068.59" stroke="#f0d6c2" stroke-width="2.4" stroke-linecap="round"/><line x1="326.36" y1="1060.60" x2="324.96" y2="1060.60" stroke="#f0d6c2" stroke-width="2.4" stroke-linecap="round"/><line x1="329.26" y1="1053.60" x2="328.27" y2="1052.61" stroke="#f0d6c2" stroke-width="2.4" stroke-linecap="round"/><line x1="336.26" y1="1050.70" x2="336.26" y2="1049.30" stroke="#f0d6c2" stroke-width="2.4" stroke-linecap="round"/><line x1="343.26" y1="1053.60" x2="344.25" y2="1052.61" stroke="#f0d6c2" stroke-width="2.4" stroke-linecap="round"/></g><g opacity="0.8"><circle cx="363.28999999999996" cy="1060.6" r="6.4" fill="#dedede" stroke="none" stroke-width="1.5"/><line x1="373.19" y1="1060.60" x2="374.59" y2="1060.60" stroke="#dedede" stroke-width="2.4" stroke-linecap="round"/><line x1="370.29" y1="1067.60" x2="371.28" y2="1068.59" stroke="#dedede" stroke-width="2.4" stroke-linecap="round"/><line x1="363.29" y1="1070.50" x2="363.29" y2="1071.90" stroke="#dedede" stroke-width="2.4" stroke-linecap="round"/><line x1="356.29" y1="1067.60" x2="355.30" y2="1068.59" stroke="#dedede" stroke-width="2.4" stroke-linecap="round"/><line x1="353.39" y1="1060.60" x2="351.99" y2="1060.60" stroke="#dedede" stroke-width="2.4" stroke-linecap="round"/><line x1="356.29" y1="1053.60" x2="355.30" y2="1052.61" stroke="#dedede" stroke-width="2.4" stroke-linecap="round"/><line x1="363.29" y1="1050.70" x2="363.29" y2="1049.30" stroke="#dedede" stroke-width="2.4" stroke-linecap="round"/><line x1="370.29" y1="1053.60" x2="371.28" y2="1052.61" stroke="#dedede" stroke-width="2.4" stroke-linecap="round"/></g><g opacity="0.8"><circle cx="390.32" cy="1060.6" r="6.4" fill="#f8eab4" stroke="none" stroke-width="1.5"/><line x1="400.22" y1="1060.60" x2="401.62" y2="1060.60" stroke="#f8eab4" stroke-width="2.4" stroke-linecap="round"/><line x1="397.32" y1="1067.60" x2="398.31" y2="1068.59" stroke="#f8eab4" stroke-width="2.4" stroke-linecap="round"/><line x1="390.32" y1="1070.50" x2="390.32" y2="1071.90" stroke="#f8eab4" stroke-width="2.4" stroke-linecap="round"/><line x1="383.32" y1="1067.60" x2="382.33" y2="1068.59" stroke="#f8eab4" stroke-width="2.4" stroke-linecap="round"/><line x1="380.42" y1="1060.60" x2="379.02" y2="1060.60" stroke="#f8eab4" stroke-width="2.4" stroke-linecap="round"/><line x1="383.32" y1="1053.60" x2="382.33" y2="1052.61" stroke="#f8eab4" stroke-width="2.4" stroke-linecap="round"/><line x1="390.32" y1="1050.70" x2="390.32" y2="1049.30" stroke="#f8eab4" stroke-width="2.4" stroke-linecap="round"/><line x1="397.32" y1="1053.60" x2="398.31" y2="1052.61" stroke="#f8eab4" stroke-width="2.4" stroke-linecap="round"/></g><g opacity="0.8"><circle cx="417.35" cy="1060.6" r="6.4" fill="#d8d8d8" stroke="none" stroke-width="1.5"/><line x1="427.25" y1="1060.60" x2="428.65" y2="1060.60" stroke="#d8d8d8" stroke-width="2.4" stroke-linecap="round"/><line x1="424.35" y1="1067.60" x2="425.34" y2="1068.59" stroke="#d8d8d8" stroke-width="2.4" stroke-linecap="round"/><line x1="417.35" y1="1070.50" x2="417.35" y2="1071.90" stroke="#d8d8d8" stroke-width="2.4" stroke-linecap="round"/><line x1="410.35" y1="1067.60" x2="409.36" y2="1068.59" stroke="#d8d8d8" stroke-width="2.4" stroke-linecap="round"/><line x1="407.45" y1="1060.60" x2="406.05" y2="1060.60" stroke="#d8d8d8" stroke-width="2.4" stroke-linecap="round"/><line x1="410.35" y1="1053.60" x2="409.36" y2="1052.61" stroke="#d8d8d8" stroke-width="2.4" stroke-linecap="round"/><line x1="417.35" y1="1050.70" x2="417.35" y2="1049.30" stroke="#d8d8d8" stroke-width="2.4" stroke-linecap="round"/><line x1="424.35" y1="1053.60" x2="425.34" y2="1052.61" stroke="#d8d8d8" stroke-width="2.4" stroke-linecap="round"/></g><circle cx="282.2" cy="987.7" r="1.3" fill="#f0b840" stroke="none" stroke-width="1.5"/><circle cx="309.23" cy="987.7" r="1.3" fill="#f0b840" stroke="none" stroke-width="1.5"/><circle cx="336.26" cy="987.7" r="1.3" fill="#f0b840" stroke="none" stroke-width="1.5"/><circle cx="363.28999999999996" cy="987.7" r="1.3" fill="#f0b840" stroke="none" stroke-width="1.5"/><circle cx="390.32" cy="987.7" r="1.3" fill="#f0b840" stroke="none" stroke-width="1.5"/></g><line x1="305" y1="990.5" x2="297" y2="998" stroke="#d9402a" stroke-width="0.9" /><line x1="320" y1="990" x2="316" y2="998.5" stroke="#d9402a" stroke-width="0.9" /><line x1="331" y1="990.5" x2="333.5" y2="996.5" stroke="#d9402a" stroke-width="0.9" /><line x1="347.5" y1="991.5" x2="354.5" y2="997.5" stroke="#d9402a" stroke-width="0.9" /><line x1="282" y1="976.5" x2="276" y2="979.5" stroke="#d9402a" stroke-width="0.9" /><circle cx="256" cy="1284" r="27.5" fill="#000" stroke="none" stroke-width="1.5"/><line x1="297.50" y1="1284.00" x2="303.50" y2="1284.00" stroke="#000" stroke-width="13" stroke-linecap="round"/><line x1="285.34" y1="1313.34" x2="289.59" y2="1317.59" stroke="#000" stroke-width="13" stroke-linecap="round"/><line x1="256.00" y1="1325.50" x2="256.00" y2="1331.50" stroke="#000" stroke-width="13" stroke-linecap="round"/><line x1="226.66" y1="1313.34" x2="222.41" y2="1317.59" stroke="#000" stroke-width="13" stroke-linecap="round"/><line x1="214.50" y1="1284.00" x2="208.50" y2="1284.00" stroke="#000" stroke-width="13" stroke-linecap="round"/><line x1="226.66" y1="1254.66" x2="222.41" y2="1250.41" stroke="#000" stroke-width="13" stroke-linecap="round"/><line x1="256.00" y1="1242.50" x2="256.00" y2="1236.50" stroke="#000" stroke-width="13" stroke-linecap="round"/><line x1="285.34" y1="1254.66" x2="289.59" y2="1250.41" stroke="#000" stroke-width="13" stroke-linecap="round"/><line x1="1068.175" y1="424.8" x2="1068.175" y2="436.7" stroke="#555" stroke-width="1.2" /><line x1="1056.3625" y1="427.8" x2="1056.3625" y2="433" stroke="#b4b4b4" stroke-width="1.1" /><line x1="1079.9875" y1="427.8" x2="1079.9875" y2="433" stroke="#b4b4b4" stroke-width="1.1" /><line x1="1115.425" y1="424.8" x2="1115.425" y2="436.7" stroke="#555" stroke-width="1.2" /><line x1="1103.6125" y1="427.8" x2="1103.6125" y2="433" stroke="#b4b4b4" stroke-width="1.1" /><line x1="1127.2375" y1="427.8" x2="1127.2375" y2="433" stroke="#b4b4b4" stroke-width="1.1" /><line x1="1162.675" y1="424.8" x2="1162.675" y2="436.7" stroke="#555" stroke-width="1.2" /><line x1="1150.8625" y1="427.8" x2="1150.8625" y2="433" stroke="#b4b4b4" stroke-width="1.1" /><line x1="1174.4875" y1="427.8" x2="1174.4875" y2="433" stroke="#b4b4b4" stroke-width="1.1" /><line x1="1209.925" y1="424.8" x2="1209.925" y2="436.7" stroke="#555" stroke-width="1.2" /><line x1="1198.1125" y1="427.8" x2="1198.1125" y2="433" stroke="#b4b4b4" stroke-width="1.1" /><line x1="1221.7375" y1="427.8" x2="1221.7375" y2="433" stroke="#b4b4b4" stroke-width="1.1" /><line x1="1257.175" y1="424.8" x2="1257.175" y2="436.7" stroke="#555" stroke-width="1.2" /><line x1="1245.3625" y1="427.8" x2="1245.3625" y2="433" stroke="#b4b4b4" stroke-width="1.1" /><line x1="1268.9875" y1="427.8" x2="1268.9875" y2="433" stroke="#b4b4b4" stroke-width="1.1" /><line x1="1304.425" y1="424.8" x2="1304.425" y2="436.7" stroke="#555" stroke-width="1.2" /><line x1="1292.6125" y1="427.8" x2="1292.6125" y2="433" stroke="#b4b4b4" stroke-width="1.1" /><line x1="1316.2375" y1="427.8" x2="1316.2375" y2="433" stroke="#b4b4b4" stroke-width="1.1" /><line x1="1351.675" y1="424.8" x2="1351.675" y2="436.7" stroke="#555" stroke-width="1.2" /><line x1="1339.8625" y1="427.8" x2="1339.8625" y2="433" stroke="#b4b4b4" stroke-width="1.1" /><line x1="1363.4875" y1="427.8" x2="1363.4875" y2="433" stroke="#b4b4b4" stroke-width="1.1" /><line x1="1398.925" y1="424.8" x2="1398.925" y2="436.7" stroke="#555" stroke-width="1.2" /><line x1="1387.1125" y1="427.8" x2="1387.1125" y2="433" stroke="#b4b4b4" stroke-width="1.1" /><line x1="1410.7375" y1="427.8" x2="1410.7375" y2="433" stroke="#b4b4b4" stroke-width="1.1" /><line x1="1446.175" y1="424.8" x2="1446.175" y2="436.7" stroke="#555" stroke-width="1.2" /><line x1="1434.3625" y1="427.8" x2="1434.3625" y2="433" stroke="#b4b4b4" stroke-width="1.1" /><line x1="1457.9875" y1="427.8" x2="1457.9875" y2="433" stroke="#b4b4b4" stroke-width="1.1" /><line x1="1493.425" y1="424.8" x2="1493.425" y2="436.7" stroke="#555" stroke-width="1.2" /><line x1="1481.6125" y1="427.8" x2="1481.6125" y2="433" stroke="#b4b4b4" stroke-width="1.1" /><line x1="1505.2375" y1="427.8" x2="1505.2375" y2="433" stroke="#b4b4b4" stroke-width="1.1" /><line x1="1540.675" y1="424.8" x2="1540.675" y2="436.7" stroke="#555" stroke-width="1.2" /><line x1="1528.8625" y1="427.8" x2="1528.8625" y2="433" stroke="#b4b4b4" stroke-width="1.1" /><line x1="1552.4875" y1="427.8" x2="1552.4875" y2="433" stroke="#b4b4b4" stroke-width="1.1" /><line x1="1587.925" y1="424.8" x2="1587.925" y2="436.7" stroke="#555" stroke-width="1.2" /><line x1="1576.1125" y1="427.8" x2="1576.1125" y2="433" stroke="#b4b4b4" stroke-width="1.1" /><line x1="1599.7375" y1="427.8" x2="1599.7375" y2="433" stroke="#b4b4b4" stroke-width="1.1" /><line x1="1635.175" y1="424.8" x2="1635.175" y2="436.7" stroke="#555" stroke-width="1.2" /><line x1="1623.3625" y1="427.8" x2="1623.3625" y2="433" stroke="#b4b4b4" stroke-width="1.1" /><line x1="1646.9875" y1="427.8" x2="1646.9875" y2="433" stroke="#b4b4b4" stroke-width="1.1" /><line x1="1682.425" y1="424.8" x2="1682.425" y2="436.7" stroke="#555" stroke-width="1.2" /><line x1="1670.6125" y1="427.8" x2="1670.6125" y2="433" stroke="#b4b4b4" stroke-width="1.1" /><line x1="1694.2375" y1="427.8" x2="1694.2375" y2="433" stroke="#b4b4b4" stroke-width="1.1" /><line x1="1729.675" y1="424.8" x2="1729.675" y2="436.7" stroke="#555" stroke-width="1.2" /><line x1="1717.8625" y1="427.8" x2="1717.8625" y2="433" stroke="#b4b4b4" stroke-width="1.1" /><line x1="1741.4875" y1="427.8" x2="1741.4875" y2="433" stroke="#b4b4b4" stroke-width="1.1" /><line x1="1776.925" y1="424.8" x2="1776.925" y2="436.7" stroke="#555" stroke-width="1.2" /><line x1="1765.1125" y1="427.8" x2="1765.1125" y2="433" stroke="#b4b4b4" stroke-width="1.1" /><line x1="1788.7375" y1="427.8" x2="1788.7375" y2="433" stroke="#b4b4b4" stroke-width="1.1" /><line x1="1824.175" y1="424.8" x2="1824.175" y2="436.7" stroke="#555" stroke-width="1.2" /><line x1="1812.3625" y1="427.8" x2="1812.3625" y2="433" stroke="#b4b4b4" stroke-width="1.1" /><line x1="1835.9875" y1="427.8" x2="1835.9875" y2="433" stroke="#b4b4b4" stroke-width="1.1" /><line x1="1871.425" y1="424.8" x2="1871.425" y2="436.7" stroke="#555" stroke-width="1.2" /><line x1="1859.6125" y1="427.8" x2="1859.6125" y2="433" stroke="#b4b4b4" stroke-width="1.1" /><line x1="1883.2375" y1="427.8" x2="1883.2375" y2="433" stroke="#b4b4b4" stroke-width="1.1" /><line x1="1918.675" y1="424.8" x2="1918.675" y2="436.7" stroke="#555" stroke-width="1.2" /><line x1="1906.8625" y1="427.8" x2="1906.8625" y2="433" stroke="#b4b4b4" stroke-width="1.1" /><line x1="1930.4875" y1="427.8" x2="1930.4875" y2="433" stroke="#b4b4b4" stroke-width="1.1" /><line x1="1965.925" y1="424.8" x2="1965.925" y2="436.7" stroke="#555" stroke-width="1.2" /><line x1="1954.1125" y1="427.8" x2="1954.1125" y2="433" stroke="#b4b4b4" stroke-width="1.1" /><line x1="1977.7375" y1="427.8" x2="1977.7375" y2="433" stroke="#b4b4b4" stroke-width="1.1" /><line x1="2013.175" y1="424.8" x2="2013.175" y2="436.7" stroke="#555" stroke-width="1.2" /><line x1="2001.3625" y1="427.8" x2="2001.3625" y2="433" stroke="#b4b4b4" stroke-width="1.1" /><line x1="2024.9875" y1="427.8" x2="2024.9875" y2="433" stroke="#b4b4b4" stroke-width="1.1" /><line x1="2060.425" y1="424.8" x2="2060.425" y2="436.7" stroke="#555" stroke-width="1.2" /><line x1="2048.6125" y1="427.8" x2="2048.6125" y2="433" stroke="#b4b4b4" stroke-width="1.1" /><line x1="2072.2375" y1="427.8" x2="2072.2375" y2="433" stroke="#b4b4b4" stroke-width="1.1" /><line x1="2107.675" y1="424.8" x2="2107.675" y2="436.7" stroke="#555" stroke-width="1.2" /><line x1="2095.8625" y1="427.8" x2="2095.8625" y2="433" stroke="#b4b4b4" stroke-width="1.1" /><line x1="2119.4875" y1="427.8" x2="2119.4875" y2="433" stroke="#b4b4b4" stroke-width="1.1" /><line x1="2154.925" y1="424.8" x2="2154.925" y2="436.7" stroke="#555" stroke-width="1.2" /><line x1="2143.1125" y1="427.8" x2="2143.1125" y2="433" stroke="#b4b4b4" stroke-width="1.1" /><line x1="2166.7375" y1="427.8" x2="2166.7375" y2="433" stroke="#b4b4b4" stroke-width="1.1" /><line x1="2202.175" y1="424.8" x2="2202.175" y2="436.7" stroke="#555" stroke-width="1.2" /><line x1="2190.3625" y1="427.8" x2="2190.3625" y2="433" stroke="#b4b4b4" stroke-width="1.1" /><line x1="2213.9875" y1="427.8" x2="2213.9875" y2="433" stroke="#b4b4b4" stroke-width="1.1" /><line x1="2249.425" y1="424.8" x2="2249.425" y2="436.7" stroke="#555" stroke-width="1.2" /><line x1="2237.6125" y1="427.8" x2="2237.6125" y2="433" stroke="#b4b4b4" stroke-width="1.1" /><line x1="2261.2375" y1="427.8" x2="2261.2375" y2="433" stroke="#b4b4b4" stroke-width="1.1" /><line x1="2296.675" y1="424.8" x2="2296.675" y2="436.7" stroke="#555" stroke-width="1.2" /><line x1="2284.8625" y1="427.8" x2="2284.8625" y2="433" stroke="#b4b4b4" stroke-width="1.1" /><line x1="2308.4875" y1="427.8" x2="2308.4875" y2="433" stroke="#b4b4b4" stroke-width="1.1" /><line x1="2343.925" y1="424.8" x2="2343.925" y2="436.7" stroke="#555" stroke-width="1.2" /><line x1="2332.1125" y1="427.8" x2="2332.1125" y2="433" stroke="#b4b4b4" stroke-width="1.1" /><line x1="2355.7375" y1="427.8" x2="2355.7375" y2="433" stroke="#b4b4b4" stroke-width="1.1" /><line x1="2391.175" y1="424.8" x2="2391.175" y2="436.7" stroke="#555" stroke-width="1.2" /><line x1="2379.3625" y1="427.8" x2="2379.3625" y2="433" stroke="#b4b4b4" stroke-width="1.1" /><line x1="2402.9875" y1="427.8" x2="2402.9875" y2="433" stroke="#b4b4b4" stroke-width="1.1" /><line x1="2438.425" y1="424.8" x2="2438.425" y2="436.7" stroke="#555" stroke-width="1.2" /><line x1="2426.6125" y1="427.8" x2="2426.6125" y2="433" stroke="#b4b4b4" stroke-width="1.1" /><line x1="2450.2375" y1="427.8" x2="2450.2375" y2="433" stroke="#b4b4b4" stroke-width="1.1" /><line x1="2485.675" y1="424.8" x2="2485.675" y2="436.7" stroke="#555" stroke-width="1.2" /><line x1="2473.8625" y1="427.8" x2="2473.8625" y2="433" stroke="#b4b4b4" stroke-width="1.1" /><line x1="2497.4875" y1="427.8" x2="2497.4875" y2="433" stroke="#b4b4b4" stroke-width="1.1" /><line x1="2532.925" y1="424.8" x2="2532.925" y2="436.7" stroke="#555" stroke-width="1.2" /><line x1="2521.1125" y1="427.8" x2="2521.1125" y2="433" stroke="#b4b4b4" stroke-width="1.1" /><line x1="2544.7375" y1="427.8" x2="2544.7375" y2="433" stroke="#b4b4b4" stroke-width="1.1" /><line x1="2580.175" y1="424.8" x2="2580.175" y2="436.7" stroke="#555" stroke-width="1.2" /><line x1="2568.3625" y1="427.8" x2="2568.3625" y2="433" stroke="#b4b4b4" stroke-width="1.1" /><line x1="2591.9875" y1="427.8" x2="2591.9875" y2="433" stroke="#b4b4b4" stroke-width="1.1" /><line x1="2627.425" y1="424.8" x2="2627.425" y2="436.7" stroke="#555" stroke-width="1.2" /><line x1="2615.6125" y1="427.8" x2="2615.6125" y2="433" stroke="#b4b4b4" stroke-width="1.1" /><line x1="2639.2375" y1="427.8" x2="2639.2375" y2="433" stroke="#b4b4b4" stroke-width="1.1" /><line x1="504.5" y1="600.4375" x2="509.5" y2="600.4375" stroke="#b4b4b4" stroke-width="1.1" /><line x1="501.5" y1="635.875" x2="512.5" y2="635.875" stroke="#555" stroke-width="1.2" /><line x1="504.5" y1="624.0625" x2="509.5" y2="624.0625" stroke="#b4b4b4" stroke-width="1.1" /><line x1="504.5" y1="647.6875" x2="509.5" y2="647.6875" stroke="#b4b4b4" stroke-width="1.1" /><line x1="501.5" y1="683.125" x2="512.5" y2="683.125" stroke="#555" stroke-width="1.2" /><line x1="504.5" y1="671.3125" x2="509.5" y2="671.3125" stroke="#b4b4b4" stroke-width="1.1" /><line x1="504.5" y1="694.9375" x2="509.5" y2="694.9375" stroke="#b4b4b4" stroke-width="1.1" /><line x1="501.5" y1="730.375" x2="512.5" y2="730.375" stroke="#555" stroke-width="1.2" /><line x1="504.5" y1="718.5625" x2="509.5" y2="718.5625" stroke="#b4b4b4" stroke-width="1.1" /><line x1="504.5" y1="742.1875" x2="509.5" y2="742.1875" stroke="#b4b4b4" stroke-width="1.1" /><line x1="501.5" y1="777.625" x2="512.5" y2="777.625" stroke="#555" stroke-width="1.2" /><line x1="504.5" y1="765.8125" x2="509.5" y2="765.8125" stroke="#b4b4b4" stroke-width="1.1" /><line x1="504.5" y1="789.4375" x2="509.5" y2="789.4375" stroke="#b4b4b4" stroke-width="1.1" /><line x1="501.5" y1="824.875" x2="512.5" y2="824.875" stroke="#555" stroke-width="1.2" /><line x1="504.5" y1="813.0625" x2="509.5" y2="813.0625" stroke="#b4b4b4" stroke-width="1.1" /><line x1="504.5" y1="836.6875" x2="509.5" y2="836.6875" stroke="#b4b4b4" stroke-width="1.1" /><line x1="501.5" y1="872.125" x2="512.5" y2="872.125" stroke="#555" stroke-width="1.2" /><line x1="504.5" y1="860.3125" x2="509.5" y2="860.3125" stroke="#b4b4b4" stroke-width="1.1" /><line x1="504.5" y1="883.9375" x2="509.5" y2="883.9375" stroke="#b4b4b4" stroke-width="1.1" /><line x1="501.5" y1="919.375" x2="512.5" y2="919.375" stroke="#555" stroke-width="1.2" /><line x1="504.5" y1="907.5625" x2="509.5" y2="907.5625" stroke="#b4b4b4" stroke-width="1.1" /><line x1="504.5" y1="931.1875" x2="509.5" y2="931.1875" stroke="#b4b4b4" stroke-width="1.1" /><line x1="501.5" y1="966.625" x2="512.5" y2="966.625" stroke="#555" stroke-width="1.2" /><line x1="504.5" y1="954.8125" x2="509.5" y2="954.8125" stroke="#b4b4b4" stroke-width="1.1" /><line x1="504.5" y1="978.4375" x2="509.5" y2="978.4375" stroke="#b4b4b4" stroke-width="1.1" /><line x1="501.5" y1="1013.875" x2="512.5" y2="1013.875" stroke="#555" stroke-width="1.2" /><line x1="504.5" y1="1002.0625" x2="509.5" y2="1002.0625" stroke="#b4b4b4" stroke-width="1.1" /><line x1="504.5" y1="1025.6875" x2="509.5" y2="1025.6875" stroke="#b4b4b4" stroke-width="1.1" /><line x1="501.5" y1="1061.125" x2="512.5" y2="1061.125" stroke="#555" stroke-width="1.2" /><line x1="504.5" y1="1049.3125" x2="509.5" y2="1049.3125" stroke="#b4b4b4" stroke-width="1.1" /><line x1="504.5" y1="1072.9375" x2="509.5" y2="1072.9375" stroke="#b4b4b4" stroke-width="1.1" /><line x1="501.5" y1="1108.375" x2="512.5" y2="1108.375" stroke="#555" stroke-width="1.2" /><line x1="504.5" y1="1096.5625" x2="509.5" y2="1096.5625" stroke="#b4b4b4" stroke-width="1.1" /><line x1="504.5" y1="1120.1875" x2="509.5" y2="1120.1875" stroke="#b4b4b4" stroke-width="1.1" /><line x1="501.5" y1="1155.625" x2="512.5" y2="1155.625" stroke="#555" stroke-width="1.2" /><line x1="504.5" y1="1143.8125" x2="509.5" y2="1143.8125" stroke="#b4b4b4" stroke-width="1.1" /><line x1="504.5" y1="1167.4375" x2="509.5" y2="1167.4375" stroke="#b4b4b4" stroke-width="1.1" /><line x1="501.5" y1="1202.875" x2="512.5" y2="1202.875" stroke="#555" stroke-width="1.2" /><line x1="504.5" y1="1191.0625" x2="509.5" y2="1191.0625" stroke="#b4b4b4" stroke-width="1.1" /><line x1="504.5" y1="1214.6875" x2="509.5" y2="1214.6875" stroke="#b4b4b4" stroke-width="1.1" /><line x1="501.5" y1="1250.125" x2="512.5" y2="1250.125" stroke="#555" stroke-width="1.2" /><line x1="504.5" y1="1238.3125" x2="509.5" y2="1238.3125" stroke="#b4b4b4" stroke-width="1.1" /><line x1="504.5" y1="1261.9375" x2="509.5" y2="1261.9375" stroke="#b4b4b4" stroke-width="1.1" /><line x1="501.5" y1="1297.375" x2="512.5" y2="1297.375" stroke="#555" stroke-width="1.2" /><line x1="504.5" y1="1285.5625" x2="509.5" y2="1285.5625" stroke="#b4b4b4" stroke-width="1.1" /><line x1="504.5" y1="1309.1875" x2="509.5" y2="1309.1875" stroke="#b4b4b4" stroke-width="1.1" /><line x1="501.5" y1="1344.625" x2="512.5" y2="1344.625" stroke="#555" stroke-width="1.2" /><line x1="504.5" y1="1332.8125" x2="509.5" y2="1332.8125" stroke="#b4b4b4" stroke-width="1.1" /><line x1="504.5" y1="1356.4375" x2="509.5" y2="1356.4375" stroke="#b4b4b4" stroke-width="1.1" /><line x1="501.5" y1="1391.875" x2="512.5" y2="1391.875" stroke="#555" stroke-width="1.2" /><line x1="504.5" y1="1380.0625" x2="509.5" y2="1380.0625" stroke="#b4b4b4" stroke-width="1.1" /><line x1="504.5" y1="1403.6875" x2="509.5" y2="1403.6875" stroke="#b4b4b4" stroke-width="1.1" /><line x1="501.5" y1="1439.125" x2="512.5" y2="1439.125" stroke="#555" stroke-width="1.2" /><line x1="504.5" y1="1427.3125" x2="509.5" y2="1427.3125" stroke="#b4b4b4" stroke-width="1.1" /><line x1="504.5" y1="1450.9375" x2="509.5" y2="1450.9375" stroke="#b4b4b4" stroke-width="1.1" /><line x1="504.5" y1="1474.5625" x2="509.5" y2="1474.5625" stroke="#b4b4b4" stroke-width="1.1" /></svg><svg class="s" width="3197" height="1702" viewBox="0 0 3197 1702" style=""><ellipse cx="1840.5" cy="1036.3" rx="128.3" ry="128.8" fill="#000"/><line x1="1649.0" y1="1036.3" x2="1611.5" y2="1036.3" stroke="#000" stroke-width="51" stroke-linecap="round"/><line x1="1840.5" y1="838.8" x2="1840.5" y2="801.3" stroke="#000" stroke-width="51" stroke-linecap="round"/><line x1="1704.9" y1="898.3" x2="1677.7" y2="871.1" stroke="#000" stroke-width="51" stroke-linecap="round"/><line x1="1704.9" y1="1174.3" x2="1677.7" y2="1201.5" stroke="#000" stroke-width="51" stroke-linecap="round"/><line x1="2032.0" y1="1036.3" x2="2069.5" y2="1036.3" stroke="#000" stroke-width="51" stroke-linecap="round"/><line x1="1840.5" y1="1233.8" x2="1840.5" y2="1271.3" stroke="#000" stroke-width="51" stroke-linecap="round"/><line x1="1976.1" y1="898.3" x2="2003.3" y2="871.1" stroke="#000" stroke-width="51" stroke-linecap="round"/><line x1="1976.1" y1="1174.3" x2="2003.3" y2="1201.5" stroke="#000" stroke-width="51" stroke-linecap="round"/><rect x="1582.2" y="764" width="527.4999999999998" height="546.3" fill="none" stroke="#9b9b9b" stroke-width="2.2" rx="0" /><circle cx="1582.4" cy="764" r="11.5" fill="#fff" stroke="#9b9b9b" stroke-width="4.3"/><circle cx="1846.2" cy="764" r="11.5" fill="#fff" stroke="#9b9b9b" stroke-width="4.3"/><circle cx="2109.9" cy="764" r="11.5" fill="#fff" stroke="#9b9b9b" stroke-width="4.3"/><circle cx="1582.4" cy="1037.9" r="11.5" fill="#fff" stroke="#9b9b9b" stroke-width="4.3"/><circle cx="2109.9" cy="1037.9" r="11.5" fill="#fff" stroke="#9b9b9b" stroke-width="4.3"/><circle cx="1582.4" cy="1310.3" r="11.5" fill="#fff" stroke="#9b9b9b" stroke-width="4.3"/><circle cx="1846.2" cy="1310.3" r="11.5" fill="#fff" stroke="#9b9b9b" stroke-width="4.3"/><circle cx="2109.9" cy="1310.3" r="11.5" fill="#fff" stroke="#9b9b9b" stroke-width="4.3"/><circle cx="1839.4" cy="678.8" r="18.2" fill="#fff" stroke="#8f8f8f" stroke-width="2"/></svg><svg class="s" width="3197" height="1702" viewBox="0 0 3197 1702" style=""><path d="M188.5,1645 H206 V1671 H188.5z" fill="none" stroke="#6a6a6a" stroke-width="1.3"/><path d="M206,1645 L223.5,1643.5 V1650 M223.5,1664 V1669.5 L206,1671" fill="none" stroke="#6a6a6a" stroke-width="1.3"/><path d="M209.5,1656.5 L214.5,1663 L222.5,1649.5" fill="none" stroke="#6a6a6a" stroke-width="2.2"/><path d="M2272.5,1653 L2279.8,1646 L2287,1653z" fill="#555"/><line x1="2266.5" y1="1656.5" x2="2293" y2="1656.5" stroke="#555" stroke-width="1.2" /><line x1="2266.5" y1="1660.5" x2="2293" y2="1660.5" stroke="#555" stroke-width="1.2" /><line x1="2266.5" y1="1664.5" x2="2293" y2="1664.5" stroke="#555" stroke-width="1.2" /><line x1="2266.5" y1="1668.5" x2="2293" y2="1668.5" stroke="#555" stroke-width="1.2" /><line x1="2266.5" y1="1672.5" x2="2281" y2="1672.5" stroke="#555" stroke-width="1.2" /><rect x="2433.5" y="1645" width="33.0" height="30" fill="none" stroke="#6a6a6a" stroke-width="1.4" rx="0" /><line x1="2442.5" y1="1645" x2="2442.5" y2="1675" stroke="#6a6a6a" stroke-width="1.4" /><line x1="2442.5" y1="1664.5" x2="2466.5" y2="1664.5" stroke="#6a6a6a" stroke-width="1.4" /><rect x="2448.5" y="1650.5" width="12.0" height="8.5" fill="none" stroke="#6a6a6a" stroke-width="1.3" rx="0" /><rect x="2509.5" y="1645.5" width="13.5" height="11.5" fill="none" stroke="#6a6a6a" stroke-width="1.4" rx="0" /><rect x="2509.5" y="1663.5" width="13.5" height="11.5" fill="none" stroke="#6a6a6a" stroke-width="1.4" rx="0" /><rect x="2527.5" y="1645.5" width="13.5" height="11.5" fill="none" stroke="#6a6a6a" stroke-width="1.4" rx="0" /><rect x="2527.5" y="1663.5" width="13.5" height="11.5" fill="none" stroke="#6a6a6a" stroke-width="1.4" rx="0" /><path d="M2601.5,1649.5 C2596,1646.5 2590,1646 2585.5,1647.5 V1672 C2590,1670.5 2596,1671 2601.5,1674.5 C2607,1671 2613,1670.5 2617.5,1672 V1647.5 C2613,1646 2607,1646.5 2601.5,1649.5 V1674.5" fill="none" stroke="#6a6a6a" stroke-width="1.4"/><line x1="2589" y1="1653" x2="2598.5" y2="1653.8" stroke="#6a6a6a" stroke-width="1.1" /><line x1="2604.5" y1="1653.8" x2="2614" y2="1653" stroke="#6a6a6a" stroke-width="1.1" /><line x1="2589" y1="1657.5" x2="2598.5" y2="1658.3" stroke="#6a6a6a" stroke-width="1.1" /><line x1="2604.5" y1="1658.3" x2="2614" y2="1657.5" stroke="#6a6a6a" stroke-width="1.1" /><line x1="2589" y1="1662" x2="2598.5" y2="1662.8" stroke="#6a6a6a" stroke-width="1.1" /><line x1="2604.5" y1="1662.8" x2="2614" y2="1662" stroke="#6a6a6a" stroke-width="1.1" /><line x1="2589" y1="1666.5" x2="2598.5" y2="1667.3" stroke="#6a6a6a" stroke-width="1.1" /><line x1="2604.5" y1="1667.3" x2="2614" y2="1666.5" stroke="#6a6a6a" stroke-width="1.1" /><line x1="2661.5" y1="1646" x2="2695" y2="1646" stroke="#6a6a6a" stroke-width="3" /><path d="M2665,1647 V1662.5 H2691.5 V1647" fill="none" stroke="#6a6a6a" stroke-width="1.4"/><line x1="2671" y1="1653" x2="2686" y2="1653" stroke="#6a6a6a" stroke-width="1.4" /><line x1="2678.3" y1="1662.5" x2="2678.3" y2="1675" stroke="#6a6a6a" stroke-width="1.4" /><line x1="2672" y1="1675" x2="2684.5" y2="1675" stroke="#6a6a6a" stroke-width="1.4" /><line x1="2727" y1="1660" x2="2742" y2="1660" stroke="#555" stroke-width="4.2" /><line x1="2753" y1="1660.5" x2="3000.5" y2="1660.5" stroke="#8a8a8a" stroke-width="1.3" /><line x1="2878" y1="1654.5" x2="2878" y2="1666.5" stroke="#8a8a8a" stroke-width="1.3" /><rect x="2806.5" y="1646" width="9.5" height="28" fill="#555"/><line x1="3012" y1="1660" x2="3032" y2="1660" stroke="#555" stroke-width="4.2" /><line x1="3022" y1="1650" x2="3022" y2="1670" stroke="#555" stroke-width="4.2" /><rect x="3146.5" y="1646" width="29.0" height="28.5" fill="none" stroke="#6a6a6a" stroke-width="1.4" rx="0" /><path d="M3161,1649.5 V1657 M3157.5,1653 L3161,1649.3 L3164.5,1653 M3161,1671 V1663.5 M3157.5,1667.5 L3161,1671.2 L3164.5,1667.5 M3150,1660.3 H3157.5 M3153.5,1656.8 L3149.8,1660.3 L3153.5,1663.8 M3172,1660.3 H3164.5 M3168.5,1656.8 L3172.2,1660.3 L3168.5,1663.8" fill="none" stroke="#6a6a6a" stroke-width="1.3"/></svg><div class="r" style="left:1822.2px;top:1063.4px;width:185.6px;height:152px;background:#fff;border:1.2px solid #c6c6c6;box-sizing:border-box;"></div><div class="r" style="left:1822.3px;top:150.2px;width:423.3px;height:875px;background:#fff;border:1.3px solid #c3c3c3;box-sizing:border-box;box-shadow:2px 2px 3px rgba(0,0,0,0.10);"></div><div class="r" style="left:2244.6px;top:524px;width:239.2px;height:188.6px;background:#fff;border:1.3px solid #c3c3c3;box-sizing:border-box;box-shadow:2px 2px 3px rgba(0,0,0,0.08);"></div><div class="r" style="left:1878px;top:272.2px;width:365.5px;height:47.5px;background:#e5e5e5;"></div><div class="r" style="left:1824.3px;top:524.2px;width:419.3px;height:59.4px;background:#c6c6c6;"></div><div class="r" style="left:2246.2px;top:651.2px;width:235.8px;height:59.4px;background:#c6c6c6;"></div><div class="r" style="left:1895px;top:393.7px;width:348.5px;height:1.3px;background:#e1e1e1;"></div><div class="r" style="left:1895px;top:518.9px;width:348.5px;height:1.3px;background:#e1e1e1;"></div><div class="r" style="left:1895px;top:703.8px;width:348.5px;height:1.3px;background:#e1e1e1;"></div><div class="r" style="left:1895px;top:768.8px;width:348.5px;height:1.3px;background:#e1e1e1;"></div><div class="r" style="left:1895px;top:833.6999999999999px;width:348.5px;height:1.3px;background:#e1e1e1;"></div><div class="r" style="left:1895px;top:898.6999999999999px;width:348.5px;height:1.3px;background:#e1e1e1;"></div><div class="r" style="left:2317px;top:646px;width:164.5px;height:1.3px;background:#e1e1e1;"></div><div class="r" style="left:2187.5px;top:598px;width:1.2px;height:34px;background:#e1e1e1;"></div><div class="r" style="left:2187.5px;top:658px;width:1.2px;height:34px;background:#e1e1e1;"></div><div class="t" style="left:1886.00px;top:168.90px;font-size:29.3px;color:#4c4c4c;transform:scaleX(0.9805);">Cu<u>t</u></div><div class="t" style="left:1886.00px;top:228.60px;font-size:29.3px;color:#4c4c4c;transform:scaleX(0.9987);"><u>C</u>opy</div><div class="t" style="left:1885.70px;top:416.00px;font-size:29.3px;color:#4c4c4c;transform:scaleX(0.9846);"><u>E</u>dit Picture</div><div class="t" style="left:1885.70px;top:475.50px;font-size:29.3px;color:#4c4c4c;transform:scaleX(0.9878);">Chang<u>e</u> Picture</div><div class="t" style="left:1885.70px;top:540.40px;font-size:29.3px;color:#262626;transform:scaleX(1.0083);"><u>G</u>roup</div><div class="t" style="left:1885.70px;top:600.40px;font-size:29.3px;color:#b3b3b3;transform:scaleX(1.0282);">Bring to F<u>r</u>ont</div><div class="t" style="left:1885.70px;top:660.30px;font-size:29.3px;color:#b3b3b3;transform:scaleX(0.9797);">Send to Bac<u>k</u></div><div class="t" style="left:1885.80px;top:726.20px;font-size:29.3px;color:#4c4c4c;transform:scaleX(0.9889);"><u>H</u>yperlink...</div><div class="t" style="left:1885.80px;top:790.70px;font-size:29.3px;color:#b3b3b3;transform:scaleX(1.0292);"><u>U</u>pgrade Media Object</div><div class="t" style="left:1885.80px;top:855.70px;font-size:29.3px;color:#4c4c4c;transform:scaleX(0.9381);"><u>S</u>ave as Picture...</div><div class="t" style="left:1885.80px;top:920.70px;font-size:29.3px;color:#4c4c4c;transform:scaleX(0.9767);">Si<u>z</u>e and Position...</div><div class="t" style="left:1885.80px;top:980.80px;font-size:29.3px;color:#4c4c4c;transform:scaleX(0.9780);">F<u>o</u>rmat Picture...</div><div class="t" style="left:2307.60px;top:542.80px;font-size:29.3px;color:#b3b3b3;transform:scaleX(1.0058);"><u>G</u>roup</div><div class="t" style="left:2308.80px;top:602.60px;font-size:29.3px;color:#b3b3b3;transform:scaleX(0.9974);">R<u>e</u>group</div><div class="t" style="left:2308.00px;top:668.10px;font-size:29.3px;color:#262626;transform:scaleX(1.0383);"><u>U</u>ngroup</div><div class="t" style="left:1847.20px;top:1155.70px;font-size:29.3px;color:#4c4c4c;transform:scaleX(0.8383);">Style</div><div class="t" style="left:1932.80px;top:1155.70px;font-size:29.3px;color:#4c4c4c;transform:scaleX(0.8879);">Crop</div><div class="t" style="left:1888.60px;top:282.80px;font-size:29.3px;color:#595959;transform:scaleX(0.9687);font-weight:bold;">Paste Options:</div><svg class="s" width="3197" height="1702" viewBox="0 0 3197 1702" style=""><path d="M2211.4,484.2 l6.8,6.3 l-6.8,6.3 z" fill="#444"/><path d="M2211.4,549.7 l6.8,6.3 l-6.8,6.3 z" fill="#444"/><path d="M2211.4,609.7 l6.8,6.3 l-6.8,6.3 z" fill="#b8b8b8"/><path d="M2211.4,669.2 l6.8,6.3 l-6.8,6.3 z" fill="#b8b8b8"/><g transform="translate(1836.2,165.4) scale(0.79)"><path d="M6.3,1.2 L9.8,0 L27.5,26.5 L24.2,29 L18.75,21.5 z" fill="#6e6e6e"/><path d="M31.2,1.2 L27.7,0 L10,26.5 L13.3,29 L18.75,21.5 z" fill="#6e6e6e"/><circle cx="8" cy="33" r="6.2" fill="none" stroke="#4a7ebb" stroke-width="2.6"/><circle cx="29.5" cy="33" r="6.2" fill="none" stroke="#4a7ebb" stroke-width="2.6"/></g><g transform="translate(1836.2,224.4) scale(0.82)"><path d="M0.5,0.5 h13 l8,8 v21.5 h-21z" fill="#fff" stroke="#7a7a7a" stroke-width="1.1"/><path d="M13.5,0.5 v8 h8" fill="none" stroke="#7a7a7a" stroke-width="1.1"/><path d="M3.5,5.5 h8" stroke="#4a7ebb" stroke-width="1.2"/><path d="M3.5,9.5 h8" stroke="#4a7ebb" stroke-width="1.2"/><path d="M3.5,13.5 h15" stroke="#4a7ebb" stroke-width="1.2"/><path d="M3.5,17.5 h15" stroke="#4a7ebb" stroke-width="1.2"/><path d="M3.5,21.5 h15" stroke="#4a7ebb" stroke-width="1.2"/><path d="M3.5,25.5 h15" stroke="#4a7ebb" stroke-width="1.2"/><path d="M15,8.5 h13 l8,8 v21.5 h-21z" fill="#fff" stroke="#7a7a7a" stroke-width="1.1"/><path d="M28,8.5 v8 h8" fill="none" stroke="#7a7a7a" stroke-width="1.1"/><path d="M18,13.5 h8" stroke="#4a7ebb" stroke-width="1.2"/><path d="M18,17.5 h8" stroke="#4a7ebb" stroke-width="1.2"/><path d="M18,21.5 h15" stroke="#4a7ebb" stroke-width="1.2"/><path d="M18,25.5 h15" stroke="#4a7ebb" stroke-width="1.2"/><path d="M18,29.5 h15" stroke="#4a7ebb" stroke-width="1.2"/><path d="M18,33.5 h15" stroke="#4a7ebb" stroke-width="1.2"/></g><g transform="translate(1837.4,280) scale(0.495)"><rect x="0" y="8" width="54" height="61" rx="2" fill="#edc67a"/><path d="M10,15 V7 a1.5,1.5 0 0 1 1.5,-1.5 H21 V2 a2,2 0 0 1 2,-2 h8 a2,2 0 0 1 2,2 V5.5 H42.5 a1.5,1.5 0 0 1 1.5,1.5 V15 z M24,3 v5 h6 v-5z" fill="#6e6e6e" fill-rule="evenodd"/><path d="M38.5,36.5 H56 L66.5,47 V74 H38.5z" fill="#fff" stroke="#7a7a7a" stroke-width="1.2"/><path d="M56,36.5 V47 H66.5" fill="none" stroke="#7a7a7a" stroke-width="1.2"/></g><g transform="translate(1898.2,336.1) scale(0.605)"><rect x="0" y="8" width="54" height="61" rx="2" fill="#edc67a"/><path d="M10,15 V7 a1.5,1.5 0 0 1 1.5,-1.5 H21 V2 a2,2 0 0 1 2,-2 h8 a2,2 0 0 1 2,2 V5.5 H42.5 a1.5,1.5 0 0 1 1.5,1.5 V15 z M24,3 v5 h6 v-5z" fill="#6e6e6e" fill-rule="evenodd"/><path d="M38.5,36.5 H56 L66.5,47 V74 H38.5z" fill="#fff" stroke="#7a7a7a" stroke-width="1.2"/><path d="M56,36.5 V47 H66.5" fill="none" stroke="#7a7a7a" stroke-width="1.2"/></g><g transform="translate(1972.7,336.1) scale(0.605)"><path d="M3,8 H51 a2,2 0 0 1 2,2 V36 H45 V16 H8 V60 H27 V69 H3 a2,2 0 0 1 -2,-2 V10 a2,2 0 0 1 2,-2z" fill="#edc67a"/><path d="M10,15 V7 a1.5,1.5 0 0 1 1.5,-1.5 H21 V2 a2,2 0 0 1 2,-2 h8 a2,2 0 0 1 2,2 V5.5 H42.5 a1.5,1.5 0 0 1 1.5,1.5 V15 z M24,3 v5 h6 v-5z" fill="#6e6e6e" fill-rule="evenodd"/></g><rect x="1989.4" y="357.2" width="23.199999999999818" height="23.19999999999999" fill="#fff" stroke="#808080" stroke-width="1.2" rx="0" /><path d="M1991.256,378.08 L1997.056,368.104 L2007.4959999999999,378.08z" fill="#4a7ebb"/><path d="M2002.392,371.584 L2005.176,368.79999999999995 L2010.9759999999999,375.296 V378.08 H2008.888z" fill="#4a7ebb"/><circle cx="2004.48" cy="363.464" r="2.55199999999998" fill="#edc577" stroke="none" stroke-width="1.5"/><rect x="1833.2" y="471.6" width="19.09999999999991" height="16.599999999999966" fill="#fff" stroke="#808080" stroke-width="1.1" rx="0" /><rect x="1835" y="473.5" width="15.5" height="2.6" fill="#4a7ebb"/><path d="M1836,484.5 L1843,479 L1847,480.5 L1850.5,477 V484.5z" fill="#9a9a9a"/><rect x="1835" y="485" width="15.5" height="2" fill="#4a7ebb"/><rect x="1848.1" y="487.5" width="21.0" height="20.30000000000001" fill="#fff" stroke="#808080" stroke-width="1.2" rx="0" /><path d="M1849.78,505.77 L1855.03,497.041 L1864.48,505.77z" fill="#4a7ebb"/><path d="M1859.86,500.086 L1862.3799999999999,497.65 L1867.6299999999999,503.334 V505.77 H1865.74z" fill="#4a7ebb"/><circle cx="1861.75" cy="492.981" r="2.31" fill="#edc577" stroke="none" stroke-width="1.5"/><path d="M1846,493.5 H1840 C1832.5,493.5 1832.5,503 1840,503 H1851" fill="none" stroke="#4a7ebb" stroke-width="2.6"/><path d="M1846.5,497.5 L1852.5,503 L1846.5,508.5" fill="none" stroke="#4a7ebb" stroke-width="2.6"/><rect x="1834.8" y="538" width="22.799999999999955" height="22.600000000000023" fill="#fff" stroke="#5a5a5a" stroke-width="1.3" rx="0" /><rect x="1844.6" y="547.6" width="22.800000000000182" height="22.799999999999955" fill="#fff" stroke="#5a5a5a" stroke-width="1.3" rx="0" /><rect x="1844.6" y="547.6" width="13.0" height="13.0" fill="none" stroke="#5a5a5a" stroke-width="1.3" rx="0" /><rect x="1833" y="536" width="3.6" height="3.6" fill="#4a7ebb"/><rect x="1865.5" y="536" width="3.6" height="3.6" fill="#4a7ebb"/><rect x="1833" y="568.5" width="3.6" height="3.6" fill="#4a7ebb"/><rect x="1865.5" y="568.5" width="3.6" height="3.6" fill="#4a7ebb"/><rect x="1833.5" y="596.5" width="16.0" height="15.5" fill="#f6f6f6" stroke="#c9c9c9" stroke-width="1.1" rx="0" /><rect x="1852.5" y="615.5" width="16.0" height="15.0" fill="#f6f6f6" stroke="#c9c9c9" stroke-width="1.1" rx="0" /><rect x="1840.5" y="603" width="21" height="21" fill="#dcdcdc"/><rect x="1840.5" y="663" width="21" height="21" fill="#dcdcdc"/><rect x="1833.5" y="656.5" width="16.0" height="15.5" fill="#f6f6f6" stroke="#c9c9c9" stroke-width="1.1" rx="0" /><rect x="1852.5" y="675.5" width="16.0" height="15.0" fill="#f6f6f6" stroke="#c9c9c9" stroke-width="1.1" rx="0" /><circle cx="1849.7" cy="737.3" r="16" fill="#fdfdfd" stroke="#7d7d7d" stroke-width="1.2"/><ellipse cx="1849.7" cy="737.3" rx="7.5" ry="16" fill="none" stroke="#7d7d7d" stroke-width="1.1"/><line x1="1849.7" y1="721.3" x2="1849.7" y2="753.3" stroke="#7d7d7d" stroke-width="1.1" /><line x1="1833.7" y1="737.3" x2="1865.7" y2="737.3" stroke="#7d7d7d" stroke-width="1.1" /><path d="M1836.5,728.5 Q1849.7,733 1863,728.5 M1836.5,746 Q1849.7,741.5 1863,746" fill="none" stroke="#7d7d7d" stroke-width="1.1"/><rect x="1845" y="746.5" width="27" height="13.5" fill="#fdfdfd"/><rect x="1847.2" y="749" width="13.5" height="8.6" rx="4.3" fill="none" stroke="#4a7ebb" stroke-width="2.8"/><rect x="1856.6" y="749" width="13.5" height="8.6" rx="4.3" fill="none" stroke="#4a7ebb" stroke-width="2.8"/><rect x="1857.6" y="916.3" width="10.400000000000091" height="35.40000000000009" fill="#fff" stroke="#808080" stroke-width="1.2" rx="0" /><line x1="1843" y1="916.3" x2="1857" y2="916.3" stroke="#999" stroke-width="1.1" stroke-dasharray="1.3 1.3"/><line x1="1843" y1="951.7" x2="1857" y2="951.7" stroke="#999" stroke-width="1.1" stroke-dasharray="1.3 1.3"/><rect x="1833.6" y="930" width="9.800000000000182" height="8.600000000000023" fill="#fff" stroke="#808080" stroke-width="1.1" rx="0" /><path d="M1838.5,927.5 V918 M1833.8,922.8 L1838.5,917.3 L1843.2,922.8 M1838.5,941 V950.5 M1833.8,945.7 L1838.5,951.2 L1843.2,945.7" fill="none" stroke="#4a7ebb" stroke-width="2.4"/><path d="M1831.8,990 L1843,978.5 L1853.5,989 L1841,999.5z" fill="#fdfdfd" stroke="#7d7d7d" stroke-width="1.1"/><circle cx="1844" cy="985.3" r="1.7" fill="#7d7d7d"/><path d="M1844,985 V977 a2.6,3 0 0 0 -5.2,0 V982" fill="none" stroke="#7d7d7d" stroke-width="1.1"/><path d="M1851.5,987 C1856,989.5 1857.5,995 1855,1002.5 L1853,1002.5 C1854.5,997 1854,993 1851.5,990z" fill="#4a7ebb"/><path d="M1871,986.5 V994.5 L1862.5,1004 L1857.8,999.8 z" fill="#7d7d7d"/><path d="M1844.5,1013.3 C1849,1009.5 1851,1005 1855,1002 C1858,1000 1862,1001.5 1862.5,1005 C1863,1009 1859,1012.5 1855,1013.3z" fill="#4a7ebb"/><path d="M1855.5,1002.5 C1858.5,1001 1861.5,1002.5 1861.8,1005.3 C1862,1007.5 1860.5,1009.5 1858.8,1011 C1859.5,1007.5 1858,1004.5 1855.5,1002.5z" fill="#fff" stroke="#4a7ebb" stroke-width="0.7"/><rect x="2256.4" y="539.7" width="23.59999999999991" height="22.799999999999955" fill="#f4f4f4" stroke="#c4c4c4" stroke-width="1.2" rx="0" /><rect x="2266.6" y="549.7" width="23.0" height="22.899999999999977" fill="#f4f4f4" stroke="#c4c4c4" stroke-width="1.2" rx="0" /><rect x="2266.6" y="549.7" width="13.400000000000091" height="12.799999999999955" fill="none" stroke="#c4c4c4" stroke-width="1.2" rx="0" /><rect x="2255" y="538.2" width="3.6" height="3.6" fill="#b9b9b9"/><rect x="2287.3" y="538.2" width="3.6" height="3.6" fill="#b9b9b9"/><rect x="2255" y="570.5" width="3.6" height="3.6" fill="#b9b9b9"/><rect x="2287.3" y="570.5" width="3.6" height="3.6" fill="#b9b9b9"/><rect x="2256.5" y="599.7" width="23.0" height="11.299999999999955" fill="#f4f4f4" stroke="#c4c4c4" stroke-width="1.2" rx="0" /><rect x="2266.8" y="609.6" width="22.799999999999727" height="22.699999999999932" fill="#f4f4f4" stroke="#c4c4c4" stroke-width="1.2" rx="0" /><rect x="2255" y="598" width="3.6" height="3.6" fill="#b9b9b9"/><rect x="2277.5" y="598" width="3.6" height="3.6" fill="#b9b9b9"/><rect x="2265.2" y="630.3" width="3.6" height="3.6" fill="#b9b9b9"/><rect x="2287.6" y="630.3" width="3.6" height="3.6" fill="#b9b9b9"/><rect x="2287.6" y="608" width="3.6" height="3.6" fill="#b9b9b9"/><path d="M2263.5,624.5 H2261 C2253.5,624.5 2253.5,613.5 2261,613.5 H2272" fill="none" stroke="#b6b6b6" stroke-width="2.8"/><path d="M2268,608.5 L2273.5,613.5 L2268,618.5" fill="none" stroke="#b6b6b6" stroke-width="2.8"/><rect x="2256.5" y="664.7" width="23.09999999999991" height="22.299999999999955" fill="none" stroke="#777" stroke-width="1.2" rx="0" /><rect x="2266.6" y="674.7" width="22.700000000000273" height="22.699999999999932" fill="#fff" stroke="#777" stroke-width="1.4" rx="0" /><rect x="2254.7" y="663" width="3.6" height="3.6" fill="#777"/><rect x="2277.8" y="663" width="3.6" height="3.6" fill="#777"/><rect x="2254.7" y="685.2" width="3.6" height="3.6" fill="#777"/><rect x="2264.8" y="673" width="3.6" height="3.6" fill="#777"/><rect x="2287.5" y="673" width="3.6" height="3.6" fill="#777"/><rect x="2264.8" y="695.6" width="3.6" height="3.6" fill="#777"/><rect x="2287.5" y="695.6" width="3.6" height="3.6" fill="#777"/><rect x="1855" y="1083.4" width="38.59999999999991" height="38.299999999999955" fill="#fff" stroke="#808080" stroke-width="1.2" rx="0" /><circle cx="1882.3" cy="1093.4" r="3.6" fill="#edc577" stroke="none" stroke-width="1.5"/><path d="M1857.8,1118.8 V1110 L1869.6,1099 L1884,1112.5 V1118.8z" fill="#b4cdea"/><path d="M1899,1094.5 V1105 L1889.5,1116 L1884,1111 z" fill="#7d7d7d"/><path d="M1887.5,1107 L1893.5,1112.5" stroke="#fff" stroke-width="1.6"/><path d="M1866.5,1126.6 C1872,1122.5 1874.5,1118 1878.5,1114.8 C1881.5,1112.8 1885.5,1114.3 1886.2,1117.8 C1886.8,1121.5 1882.5,1125.5 1877.5,1126.6z" fill="#4a7ebb"/><path d="M1879,1115.3 C1882,1113.8 1885,1115.3 1885.4,1118 C1885.8,1120.5 1884,1122.8 1882,1124.3 C1882.8,1120.5 1881.5,1117.5 1879,1115.3z" fill="#fff" stroke="#4a7ebb" stroke-width="0.8"/><path d="M1908.8,1100.25 h9 l-4.5,4.5 z" fill="#666"/><rect x="1941.1" y="1083.4" width="39.80000000000018" height="39.19999999999982" fill="none" stroke="#808080" stroke-width="1.1" rx="0" stroke-dasharray="2.2 1.6"/><rect x="1941.1" y="1083.4" width="23.600000000000136" height="23.09999999999991" fill="#fff" stroke="#808080" stroke-width="1.2" rx="0" /><path d="M1942.9879999999998,1104.19 L1948.888,1094.257 L1959.508,1104.19z" fill="#4a7ebb"/><path d="M1954.316,1097.722 L1957.148,1094.95 L1963.048,1101.4180000000001 V1104.19 H1960.924z" fill="#4a7ebb"/><circle cx="1956.44" cy="1089.6370000000002" r="2.596000000000015" fill="#edc577" stroke="none" stroke-width="1.5"/><path d="M1972.5,1115 V1126.7 M1979.3,1109.3 V1122.6 M1972.5,1115.8 H1985 M1967.3,1121.3 H1979.3" fill="none" stroke="#7d7d7d" stroke-width="3"/></svg><svg class="s" width="3197" height="1702" viewBox="0 0 3197 1702" style=""><path d="M1604,550 L1797,549.8 L1789.3,545.8 Q1786.5,540.5 1793,539.2 L1823,558.3 L1793.5,575.8 Q1786.5,575 1788,569.5 L1795,564.3 L1604,552 Z" fill="#e10606" stroke="#e10606" stroke-width="1" stroke-linejoin="round"/><path d="M2451,662.5 L2459.3,628 Q2462.5,621.5 2467.5,627.5 L2469.3,637 L2564,547 L2565.3,548.3 L2479.5,647.3 L2484.5,645.5 Q2490.5,648.5 2485,653 Z" fill="#e10606" stroke="#e10606" stroke-width="1" stroke-linejoin="round"/></svg></body></html>
